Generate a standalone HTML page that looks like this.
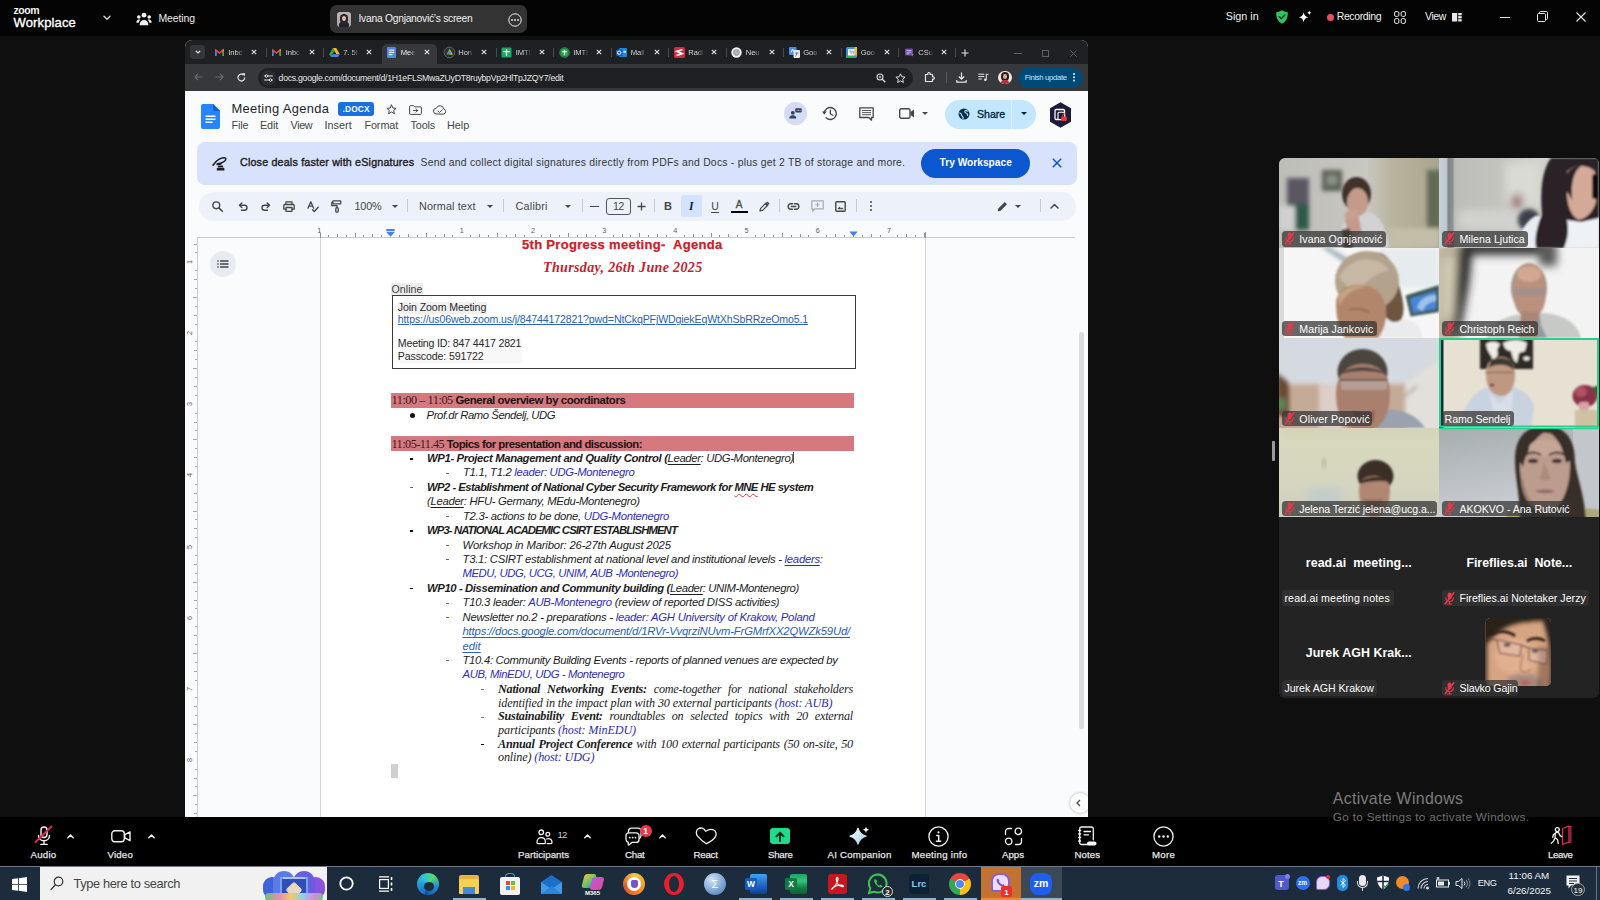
<!DOCTYPE html>
<html lang="en">
<head>
<meta charset="utf-8">
<title>Zoom Meeting</title>
<style>
*{box-sizing:border-box;margin:0;padding:0}
html,body{width:1600px;height:900px;overflow:hidden;background:#0f0f0f;font-family:"Liberation Sans",sans-serif;color:#fff}
div,span,svg,a,i,b{position:absolute;white-space:nowrap;display:block}
span{white-space:pre}
span.s{position:static;display:inline}
svg{overflow:visible}
.ic{fill:none;stroke:currentColor;stroke-linecap:round;stroke-linejoin:round}
#ztop{left:0;top:0;width:1600px;height:36px;background:#040404}
#pill{left:330px;top:5px;width:197px;height:28px;border-radius:7px;background:#333}
#win{left:185px;top:40px;width:902.500px;height:777.500px;background:#f9fbfd;border-radius:7px 7px 0 0;overflow:hidden}
#tabs{left:0;top:0;width:903px;height:23.500px;background:#1f2023}
#nav{left:0;top:23.500px;width:903px;height:27.500px;background:#37383b}
#tabs .x{top:8.700px;width:6px;height:6px}
#tabs .sep{top:8px;width:1px;height:9px;background:#4a4b4e}
#tabs .fv{top:6.500px;width:11px;height:11px}
#docs svg{color:#444746}
#docs .tsep{top:159px;width:1px;height:13px;background:#c7c9cc}
#docs .arr{width:0;height:0;border-left:3.200px solid transparent;border-right:3.200px solid transparent;border-top:3.600px solid #444746}
#page{left:134.500px;top:197.500px;width:606px;height:581px;background:#fff;border-left:1px solid #d4d6d9;border-right:1px solid #d4d6d9}
.u{text-decoration:underline;text-decoration-thickness:.8px;text-underline-offset:1.500px}
#gal{left:1279.200px;top:158px;width:320.200px;height:539.500px;background:#232323;border-radius:6px;overflow:hidden}
.tile{width:160.300px;height:89.900px;overflow:hidden;background:#232323}
.tile>svg{left:0;top:0}
.nm{left:2.500px;top:73px;height:15.500px;border-radius:3.500px;background:rgba(52,52,52,.74)}
.big{top:30px;left:0;width:160px;text-align:center;font-weight:bold;font-size:13.200px;color:#fff;line-height:16px}
#zbar{left:0;top:817px;width:1600px;height:49px;background:#000}
#zbar svg{color:#f2f2f2}
#task{left:0;top:866px;width:1600px;height:34px;background:#1c2c3c;border-top:1px solid #6f7c88}
#task .run{top:31px;height:2px;width:33px;background:#8fb3d4}
#task .ti{top:6px;width:22px;height:22px}
</style>
</head>
<body>

<div id="ztop">
<span style="left:13.50px;top:4px;font-size:10.50px;line-height:normal;color:#f5f5f5;font-weight:bold;letter-spacing:-0.480px;">zoom</span>
<span style="left:13.50px;top:15px;font-size:13.00px;line-height:normal;color:#fff;letter-spacing:0.146px;-webkit-text-stroke:.35px #fff;">Workplace</span>
<svg style="left:103px;top:15px" width="8" height="6" viewBox="0 0 8 6"><path class="ic" style="color:#ddd" stroke-width="1.3" d="M1 1.2l3 3 3-3"/></svg>
<svg style="left:136px;top:12px" width="16" height="14" viewBox="0 0 16 14" fill="#f2f2f2"><circle cx="8" cy="3.2" r="2.4"/><circle cx="2.8" cy="5" r="1.8"/><circle cx="13.2" cy="5" r="1.8"/><path d="M3.6 13.2c0-3.2 1.8-5.2 4.4-5.2s4.4 2 4.4 5.200z"/><path d="M0.300 10.800c0-2.200 1.200-3.400 2.700-3.400 0.500 0 0.900 0.100 1.300 0.300-1 1-1.500 2-1.700 3.100zM15.700 10.800c0-2.200-1.200-3.400-2.700-3.400-0.500 0-0.900 0.100-1.300 0.300 1 1 1.500 2 1.700 3.100z"/></svg>
<span style="left:158.50px;top:12px;font-size:10.50px;line-height:normal;color:#ececec;letter-spacing:-0.123px;">Meeting</span>
<div id="pill">
<div style="left:7px;top:7px;width:14px;height:15px;border-radius:3px;background:linear-gradient(180deg,#bdb7b4 0%,#a9a4a6 100%);overflow:hidden"><div style="left:3px;top:2px;width:8px;height:9px;border-radius:4px 4px 3px 3px;background:#2a2226"></div><div style="left:5px;top:4px;width:4px;height:5px;border-radius:2px;background:#d9b7a6"></div><div style="left:2px;top:10px;width:10px;height:6px;border-radius:3px 3px 0 0;background:#23232b"></div></div>
<span style="left:28.50px;top:8px;font-size:10.30px;line-height:normal;color:#f0f0f0;letter-spacing:-0.264px;">Ivana Ognjanović’s screen</span>
<svg style="left:177.500px;top:7.500px" width="14" height="14" viewBox="0 0 14 14"><circle cx="7" cy="7" r="6.2" fill="none" stroke="#eee" stroke-width="1"/><circle cx="4" cy="7" r=".9" fill="#eee"/><circle cx="7" cy="7" r=".9" fill="#eee"/><circle cx="10" cy="7" r=".9" fill="#eee"/></svg>
</div>
<span style="left:1225.70px;top:10px;font-size:10.80px;line-height:normal;color:#f0f0f0;letter-spacing:-0.002px;">Sign in</span>
<svg style="left:1274.500px;top:10px" width="14" height="14" viewBox="0 0 14 14"><path d="M7 .3c1.800 1.200 3.700 1.800 5.800 1.900 0.200 5.400-1.700 9.200-5.800 11.500C2.900 11.400 1 7.600 1.200 2.200 3.300 2.100 5.200 1.500 7 .3z" fill="#2fc45e"/><path d="M4.300 6.800l2 2 3.500-3.800" fill="none" stroke="#0a3d1c" stroke-width="1.500" stroke-linecap="round" stroke-linejoin="round"/></svg>
<svg style="left:1298px;top:9.500px" width="14" height="14" viewBox="0 0 14 14" fill="#fff"><path d="M5.600 2.200c.6 3.100 1.900 4.400 5 5-3.100.6-4.400 1.900-5 5-.6-3.100-1.900-4.400-5-5 3.100-.6 4.400-1.900 5-5z"/><path d="M11.300.4c.3 1.400.9 2 2.300 2.300-1.400.3-2 .9-2.300 2.300-.3-1.400-.9-2-2.300-2.300 1.400-.3 2-.9 2.300-2.300z"/></svg>
<div style="left:1326.500px;top:14px;width:7px;height:7px;border-radius:50%;background:#ea4f5c"></div>
<span style="left:1336.70px;top:10px;font-size:10.50px;line-height:normal;color:#f0f0f0;letter-spacing:-0.375px;">Recording</span>
<svg style="left:1394px;top:10.500px" width="12" height="13" viewBox="0 0 12 13"><g fill="none" stroke="#e8e8e8" stroke-width="1"><rect x=".6" y=".6" width="4.300" height="4.800" rx="1.400"/><rect x="7.100" y=".6" width="4.300" height="4.800" rx="1.400"/><rect x=".6" y="7.600" width="4.300" height="4.800" rx="1.400"/><rect x="7.100" y="7.600" width="4.300" height="4.800" rx="1.400"/></g></svg>
<span style="left:1425.00px;top:10px;font-size:10.50px;line-height:normal;color:#f0f0f0;letter-spacing:-0.395px;">View</span>
<svg style="left:1451.500px;top:12.500px" width="10" height="9" viewBox="0 0 10 9" fill="#e8e8e8"><rect x="0" y="0" width="5.200" height="8.500"/><rect x="6.200" y="0" width="3.500" height="2.300"/><rect x="6.200" y="3.100" width="3.500" height="2.300"/><rect x="6.200" y="6.200" width="3.500" height="2.300"/></svg>
<div style="left:1500px;top:16.500px;width:9.500px;height:1.200px;background:#e6e6e6"></div>
<svg style="left:1537px;top:11px" width="11" height="11" viewBox="0 0 11 11"><g fill="none" stroke="#e6e6e6" stroke-width="1"><rect x=".5" y="2.500" width="8" height="8" rx="1"/><path d="M2.500 2.500V1.500a1 1 0 0 1 1-1h6a1 1 0 0 1 1 1v6a1 1 0 0 1-1 1h-1"/></g></svg>
<svg style="left:1576px;top:12px" width="10" height="10" viewBox="0 0 10 10"><path d="M.5.5l9 9M9.500.5l-9 9" stroke="#e6e6e6" stroke-width="1.100" fill="none"/></svg>
</div>
<div id="win">
<div id="tabs">
<div style="left:5px;top:4.500px;width:15px;height:14.500px;border-radius:4px;background:#35363a"></div>
<svg style="left:9.500px;top:10px" width="6" height="4" viewBox="0 0 6 4"><path d="M.8.800L3 3 5.200.8" fill="none" stroke="#e8e8e8" stroke-width="1.200"/></svg>
<div style="left:197px;top:3.500px;width:54.500px;height:21px;border-radius:5px 5px 0 0;background:#37383b"></div>
<svg class="fv" style="left:28.5px" viewBox="0 0 11 11"><path d="M1.800 8.800V3.200L5.500 6l3.700-2.800v5.600" fill="none" stroke="#ea4335" stroke-width="1.600"/><path d="M1.800 9V3.800" stroke="#4285f4" stroke-width="1.600"/><path d="M9.200 9V3.800" stroke="#34a853" stroke-width="1.600"/><path d="M8.600 3.600l.9-.7" stroke="#fbbc04" stroke-width="1.400"/></svg>
<span style="left:43.30px;top:8px;font-size:7.60px;line-height:normal;color:#d9d9d9;width:15.500px;overflow:hidden;-webkit-mask-image:linear-gradient(90deg,#000 55%,transparent 100%);mask-image:linear-gradient(90deg,#000 55%,transparent 100%);letter-spacing:-.1px;">Inbc</span>
<svg class="x" style="left:66.2px" viewBox="0 0 6 6"><path d="M.8.800l4.400 4.400M5.200.8L.8 5.200" stroke="#e3e3e3" stroke-width="1.100" fill="none"/></svg>
<div class="sep" style="left:80.5px"></div>
<svg class="fv" style="left:86.0px" viewBox="0 0 11 11"><path d="M1.800 8.800V3.200L5.500 6l3.700-2.800v5.600" fill="none" stroke="#ea4335" stroke-width="1.600"/><path d="M1.800 9V3.800" stroke="#4285f4" stroke-width="1.600"/><path d="M9.200 9V3.800" stroke="#34a853" stroke-width="1.600"/><path d="M8.600 3.600l.9-.7" stroke="#fbbc04" stroke-width="1.400"/></svg>
<span style="left:100.80px;top:8px;font-size:7.60px;line-height:normal;color:#d9d9d9;width:15.500px;overflow:hidden;-webkit-mask-image:linear-gradient(90deg,#000 55%,transparent 100%);mask-image:linear-gradient(90deg,#000 55%,transparent 100%);letter-spacing:-.1px;">Inbc</span>
<svg class="x" style="left:123.7px" viewBox="0 0 6 6"><path d="M.8.800l4.400 4.400M5.200.8L.8 5.200" stroke="#e3e3e3" stroke-width="1.100" fill="none"/></svg>
<div class="sep" style="left:138.0px"></div>
<svg class="fv" style="left:143.5px" viewBox="0 0 11 11"><path d="M3.800 1h3.400l3.600 6.200H7.400z" fill="#fbbc04"/><path d="M3.800 1L.2 7.200 1.900 10l3.600-6.200z" fill="#34a853"/><path d="M1.900 10h7.200l1.700-2.800H3.600z" fill="#4285f4"/></svg>
<span style="left:158.30px;top:8px;font-size:7.60px;line-height:normal;color:#d9d9d9;width:15.500px;overflow:hidden;-webkit-mask-image:linear-gradient(90deg,#000 55%,transparent 100%);mask-image:linear-gradient(90deg,#000 55%,transparent 100%);letter-spacing:-.1px;">7. 5t</span>
<svg class="x" style="left:181.2px" viewBox="0 0 6 6"><path d="M.8.800l4.400 4.400M5.200.8L.8 5.200" stroke="#e3e3e3" stroke-width="1.100" fill="none"/></svg>
<svg class="fv" style="left:201.0px" viewBox="0 0 11 11"><rect x="1" y="0" width="9" height="11" rx="1.200" fill="#4c8bf5"/><path d="M2.800 3.200h5.400M2.800 5.400h5.400M2.800 7.600h3.600" stroke="#fff" stroke-width="1"/></svg>
<span style="left:215.80px;top:8px;font-size:7.60px;line-height:normal;color:#f0f0f0;width:15.500px;overflow:hidden;-webkit-mask-image:linear-gradient(90deg,#000 55%,transparent 100%);mask-image:linear-gradient(90deg,#000 55%,transparent 100%);letter-spacing:-.1px;">Mee</span>
<svg class="x" style="left:238.7px" viewBox="0 0 6 6"><path d="M.8.800l4.400 4.400M5.200.8L.8 5.200" stroke="#e3e3e3" stroke-width="1.100" fill="none"/></svg>
<svg class="fv" style="left:258.5px" viewBox="0 0 11 11"><circle cx="5.500" cy="5.500" r="5.300" fill="#2b2d30" stroke="#8a8d91" stroke-width=".6"/><path d="M5.500 1.800L2.200 7.600h6.600z" fill="#34a853"/><path d="M5.500 1.800l3.300 5.800H5.500z" fill="#fbbc04"/><circle cx="5.500" cy="6" r="1.400" fill="#4285f4"/></svg>
<span style="left:273.30px;top:8px;font-size:7.60px;line-height:normal;color:#d9d9d9;width:15.500px;overflow:hidden;-webkit-mask-image:linear-gradient(90deg,#000 55%,transparent 100%);mask-image:linear-gradient(90deg,#000 55%,transparent 100%);letter-spacing:-.1px;">Hon</span>
<svg class="x" style="left:296.2px" viewBox="0 0 6 6"><path d="M.8.800l4.400 4.400M5.200.8L.8 5.200" stroke="#e3e3e3" stroke-width="1.100" fill="none"/></svg>
<div class="sep" style="left:310.5px"></div>
<svg class="fv" style="left:316.0px" viewBox="0 0 11 11"><rect x=".5" y=".5" width="10" height="10" rx="1.200" fill="#1fa463"/><path d="M5.500 2v7M2.200 4.600h6.600" stroke="#e6f4ea" stroke-width="1.300"/></svg>
<span style="left:330.80px;top:8px;font-size:7.60px;line-height:normal;color:#d9d9d9;width:15.500px;overflow:hidden;-webkit-mask-image:linear-gradient(90deg,#000 55%,transparent 100%);mask-image:linear-gradient(90deg,#000 55%,transparent 100%);letter-spacing:-.1px;">IMTI</span>
<svg class="x" style="left:353.7px" viewBox="0 0 6 6"><path d="M.8.800l4.400 4.400M5.200.8L.8 5.200" stroke="#e3e3e3" stroke-width="1.100" fill="none"/></svg>
<div class="sep" style="left:368.0px"></div>
<svg class="fv" style="left:373.5px" viewBox="0 0 11 11"><circle cx="5.500" cy="5.500" r="5.400" fill="#1f7a44"/><rect x="2.300" y="2.300" width="6.400" height="6.400" rx=".8" fill="#34a853"/><path d="M5.500 2.800v5.400M3 4.800h5" stroke="#e6f4ea" stroke-width="1.100"/></svg>
<span style="left:388.30px;top:8px;font-size:7.60px;line-height:normal;color:#d9d9d9;width:15.500px;overflow:hidden;-webkit-mask-image:linear-gradient(90deg,#000 55%,transparent 100%);mask-image:linear-gradient(90deg,#000 55%,transparent 100%);letter-spacing:-.1px;">IMTI</span>
<svg class="x" style="left:411.2px" viewBox="0 0 6 6"><path d="M.8.800l4.400 4.400M5.200.8L.8 5.200" stroke="#e3e3e3" stroke-width="1.100" fill="none"/></svg>
<div class="sep" style="left:425.5px"></div>
<svg class="fv" style="left:431.0px" viewBox="0 0 11 11"><rect x="3" y="1" width="8" height="9" rx="1" fill="#1a86e0"/><rect x="0" y="2.500" width="6.500" height="6.500" rx="1" fill="#0f5fb5"/><circle cx="3.200" cy="5.700" r="1.700" fill="none" stroke="#fff" stroke-width="1"/><rect x="7.300" y="3.800" width="2.600" height="2" fill="#cfe6fb"/></svg>
<span style="left:445.80px;top:8px;font-size:7.60px;line-height:normal;color:#d9d9d9;width:15.500px;overflow:hidden;-webkit-mask-image:linear-gradient(90deg,#000 55%,transparent 100%);mask-image:linear-gradient(90deg,#000 55%,transparent 100%);letter-spacing:-.1px;">Mail</span>
<svg class="x" style="left:468.7px" viewBox="0 0 6 6"><path d="M.8.800l4.400 4.400M5.200.8L.8 5.200" stroke="#e3e3e3" stroke-width="1.100" fill="none"/></svg>
<div class="sep" style="left:483.0px"></div>
<svg class="fv" style="left:488.5px" viewBox="0 0 11 11"><rect x="0" y="0" width="11" height="11" rx="1.500" fill="#d7263d"/><path d="M8.500 2.500L2.800 4.300l5.400 2.400-5.700 1.800" fill="none" stroke="#fff" stroke-width="1.700"/></svg>
<span style="left:503.30px;top:8px;font-size:7.60px;line-height:normal;color:#d9d9d9;width:15.500px;overflow:hidden;-webkit-mask-image:linear-gradient(90deg,#000 55%,transparent 100%);mask-image:linear-gradient(90deg,#000 55%,transparent 100%);letter-spacing:-.1px;">Radi</span>
<svg class="x" style="left:526.2px" viewBox="0 0 6 6"><path d="M.8.800l4.400 4.400M5.200.8L.8 5.200" stroke="#e3e3e3" stroke-width="1.100" fill="none"/></svg>
<div class="sep" style="left:540.5px"></div>
<svg class="fv" style="left:546.0px" viewBox="0 0 11 11"><circle cx="5.500" cy="5.500" r="5.200" fill="#f2f2f2"/><circle cx="5.500" cy="5.500" r="3" fill="#b5b5b5"/><circle cx="5.500" cy="5.500" r="3" fill="none" stroke="#777" stroke-width=".6"/></svg>
<span style="left:560.80px;top:8px;font-size:7.60px;line-height:normal;color:#d9d9d9;width:15.500px;overflow:hidden;-webkit-mask-image:linear-gradient(90deg,#000 55%,transparent 100%);mask-image:linear-gradient(90deg,#000 55%,transparent 100%);letter-spacing:-.1px;">Neu</span>
<svg class="x" style="left:583.7px" viewBox="0 0 6 6"><path d="M.8.800l4.400 4.400M5.200.8L.8 5.200" stroke="#e3e3e3" stroke-width="1.100" fill="none"/></svg>
<div class="sep" style="left:598.0px"></div>
<svg class="fv" style="left:603.5px" viewBox="0 0 11 11"><rect x="0" y="0" width="7.500" height="8" rx="1" fill="#4c8bf5"/><rect x="4.500" y="3" width="6.500" height="8" rx="1" fill="#e8eaed"/><path d="M2 5.500l1.600-3.500 1.600 3.500" fill="none" stroke="#fff" stroke-width=".9"/><path d="M6.300 6h3.200M7.800 5.200V6c0 1.600-.6 2.800-1.500 3.500" fill="none" stroke="#5f6368" stroke-width=".8"/></svg>
<span style="left:618.30px;top:8px;font-size:7.60px;line-height:normal;color:#d9d9d9;width:15.500px;overflow:hidden;-webkit-mask-image:linear-gradient(90deg,#000 55%,transparent 100%);mask-image:linear-gradient(90deg,#000 55%,transparent 100%);letter-spacing:-.1px;">Goo</span>
<svg class="x" style="left:641.2px" viewBox="0 0 6 6"><path d="M.8.800l4.400 4.400M5.200.8L.8 5.200" stroke="#e3e3e3" stroke-width="1.100" fill="none"/></svg>
<div class="sep" style="left:655.5px"></div>
<svg class="fv" style="left:661.0px" viewBox="0 0 11 11"><rect x="0" y="0" width="11" height="11" rx="1.600" fill="#4285f4"/><rect x="0" y="8.500" width="8.500" height="2.500" fill="#34a853"/><rect x="8.500" y="0" width="2.500" height="8.500" fill="#fbbc04"/><rect x="2" y="2" width="6.500" height="6.500" fill="#fff"/><path d="M3.300 4h1.800v3.300M6.200 4.300l1-.5v3.500" fill="none" stroke="#4285f4" stroke-width=".8"/></svg>
<span style="left:675.80px;top:8px;font-size:7.60px;line-height:normal;color:#d9d9d9;width:15.500px;overflow:hidden;-webkit-mask-image:linear-gradient(90deg,#000 55%,transparent 100%);mask-image:linear-gradient(90deg,#000 55%,transparent 100%);letter-spacing:-.1px;">Goo</span>
<svg class="x" style="left:698.7px" viewBox="0 0 6 6"><path d="M.8.800l4.400 4.400M5.200.8L.8 5.200" stroke="#e3e3e3" stroke-width="1.100" fill="none"/></svg>
<div class="sep" style="left:713.0px"></div>
<svg class="fv" style="left:718.5px" viewBox="0 0 11 11"><rect x="1" y="1.500" width="8" height="7" rx="1" fill="#6b4aa8"/><path d="M2.500 3.500h5M2.500 5.200h5M2.500 6.800h3" stroke="#e6d8ff" stroke-width=".7"/><path d="M7 6.500l3 1.200-1.300.5-.5 1.300z" fill="#e86aa6"/></svg>
<span style="left:733.30px;top:8px;font-size:7.60px;line-height:normal;color:#d9d9d9;width:15.500px;overflow:hidden;-webkit-mask-image:linear-gradient(90deg,#000 55%,transparent 100%);mask-image:linear-gradient(90deg,#000 55%,transparent 100%);letter-spacing:-.1px;">CSu</span>
<svg class="x" style="left:756.2px" viewBox="0 0 6 6"><path d="M.8.800l4.400 4.400M5.200.8L.8 5.200" stroke="#e3e3e3" stroke-width="1.100" fill="none"/></svg>
<div class="sep" style="left:770px"></div>
<svg style="left:776px;top:9px" width="8" height="8" viewBox="0 0 8 8"><path d="M4 .5v7M.5 4h7" stroke="#e3e3e3" stroke-width="1.100"/></svg>
<div style="left:829px;top:12.500px;width:8px;height:1px;background:#5f6063"></div>
<div style="left:857px;top:9.500px;width:7px;height:7px;border:1px solid #5f6063"></div>
<svg style="left:884.500px;top:9.500px" width="7" height="7" viewBox="0 0 7 7"><path d="M.3.300l6.400 6.400M6.700.3L.3 6.700" stroke="#5f6063" stroke-width="1"/></svg>
</div>
<div id="nav">
<svg style="left:9px;top:9.500px" width="9" height="8" viewBox="0 0 9 8"><path d="M8.500 4H1M4 .8L.8 4 4 7.200" fill="none" stroke="#6b6c6f" stroke-width="1.100"/></svg>
<svg style="left:30px;top:9.500px" width="9" height="8" viewBox="0 0 9 8"><path d="M.5 4H8M5 .8L8.200 4 5 7.200" fill="none" stroke="#6b6c6f" stroke-width="1.100"/></svg>
<svg style="left:51.500px;top:9px" width="9" height="9" viewBox="0 0 9 9"><path d="M7.800 4.500A3.400 3.400 0 1 1 6.700 2" fill="none" stroke="#e6e6e6" stroke-width="1.200"/><path d="M5 .3h3v3z" fill="#e6e6e6"/></svg>
<div style="left:73px;top:4.500px;width:655px;height:19.500px;border-radius:10px;background:#1f2023"></div>
<div style="left:75.500px;top:6.500px;width:15.500px;height:15.500px;border-radius:50%;background:#2a2b2e"></div>
<svg style="left:79px;top:10.500px" width="9" height="8" viewBox="0 0 9 8"><g fill="none" stroke="#e6e6e6" stroke-width="1"><path d="M3.800 2h5M.2 2h1M.2 6h5M7.800 6h1"/><circle cx="2.500" cy="2" r="1.200"/><circle cx="6.500" cy="6" r="1.200"/></g></svg>
<span style="left:93.60px;top:9px;font-size:8.70px;line-height:normal;color:#e8e8e8;letter-spacing:-0.270px;">docs.google.com/document/d/1H1eFLSMwaZUyDT8ruybpVp2HlTpJZQY7/edit</span>
<svg style="left:691px;top:9.500px" width="10" height="10" viewBox="0 0 10 10"><circle cx="4" cy="4" r="3" fill="none" stroke="#dcdcdc" stroke-width="1.100"/><path d="M6.300 6.300L9.300 9.300" stroke="#dcdcdc" stroke-width="1.300"/><path d="M2.700 4h2.600M4 2.700v2.600" stroke="#dcdcdc" stroke-width=".8"/></svg>
<svg style="left:710px;top:9px" width="11" height="10" viewBox="0 0 11 10"><path d="M5.500.8l1.400 3 3.200.3-2.400 2.200.7 3.200-2.900-1.700-2.900 1.700.7-3.200L.9 4.100l3.200-.3z" fill="none" stroke="#dcdcdc" stroke-width="1"/></svg>
<svg style="left:739px;top:8.500px" width="11" height="11" viewBox="0 0 11 11"><path d="M1.500 2.500h2.300a1.300 1.300 0 1 1 2.400 0h2.300v2.300a1.300 1.300 0 1 1 0 2.400v2.300h-7z" fill="none" stroke="#e6e6e6" stroke-width="1.200" stroke-linejoin="round"/></svg>
<div style="left:760.500px;top:8px;width:1px;height:11px;background:#5a5b5e"></div>
<svg style="left:771px;top:8.500px" width="11" height="11" viewBox="0 0 11 11"><path d="M5.500.5v6.500M2.800 4.500l2.700 2.700 2.700-2.700M.8 8v2.200h9.400V8" fill="none" stroke="#e6e6e6" stroke-width="1.200"/></svg>
<svg style="left:793px;top:9px" width="11" height="9" viewBox="0 0 11 9"><path d="M.3 1.200h6M.3 3.600h6M.3 6h3.500" stroke="#e6e6e6" stroke-width="1"/><path d="M8.300 1v5.500" stroke="#e6e6e6" stroke-width="1"/><circle cx="7.300" cy="6.800" r="1.300" fill="#e6e6e6"/><path d="M8.300 1l2.200.8" stroke="#e6e6e6" stroke-width="1"/></svg>
<div style="left:813px;top:7px;width:13.500px;height:13.500px;border-radius:50%;background:#efe9e6;overflow:hidden"><div style="left:3px;top:1.500px;width:7.500px;height:9px;border-radius:4px;background:#2a1d1d"></div><div style="left:5px;top:3.500px;width:3.500px;height:4.500px;border-radius:2px;background:#d9a892"></div><div style="left:2.500px;top:9.500px;width:8.500px;height:5px;border-radius:3px 3px 0 0;background:#b0323a"></div></div>
<div style="left:832.500px;top:4.500px;width:65px;height:19.500px;border-radius:10px;background:#004a77"></div>
<span style="left:839.70px;top:9px;font-size:7.80px;line-height:normal;color:#c2e7ff;letter-spacing:-0.370px;">Finish update</span>
<div style="left:888px;top:9.500px;width:1.600px;height:1.600px;border-radius:50%;background:#c2e7ff;box-shadow:0 3.300px 0 #c2e7ff,0 6.600px 0 #c2e7ff"></div>
</div>
<div id="docs" style="left:0;top:0;width:903px;height:200px">
<svg style="left:16.4px;top:63.6px" width="19" height="25" viewBox="0 0 19 25"><path d="M2 0h10l7 7v16a2 2 0 0 1-2 2H2a2 2 0 0 1-2-2V2a2 2 0 0 1 2-2z" fill="#2684fc"/><path d="M12 0l7 7h-5a2 2 0 0 1-2-2z" fill="#0b5fd0"/><path d="M4.500 12.200h10M4.500 15.200h10M4.500 18.200h7" stroke="#fff" stroke-width="1.400"/></svg>
<span style="left:46.40px;top:61px;font-size:12.90px;line-height:normal;color:#1f1f1f;letter-spacing:0.329px;">Meeting Agenda</span>
<div style="left:153.0px;top:62.0px;width:36px;height:14px;border-radius:3px;background:#1a6fe3"></div>
<span style="left:157.50px;top:64px;font-size:8.30px;line-height:normal;color:#fff;font-weight:bold;letter-spacing:0.204px;">.DOCX</span>
<svg style="left:201.0px;top:64.0px" width="11" height="11" viewBox="0 0 11 11"><path class="ic" stroke-width="1" stroke-linejoin="miter" d="M5.500 1l1.400 3 3.200.3-2.400 2.200.7 3.200-2.900-1.700-2.900 1.700.7-3.200L.9 4.300l3.200-.3z"/></svg>
<svg style="left:224.3px;top:64.8px" width="13" height="10" viewBox="0 0 13 10"><path class="ic" stroke-width="1" d="M.6 1.500c0-.5.400-.9.900-.9h3l1.200 1.300h5.800c.5 0 .9.400.9.900v5.700c0 .5-.4.900-.9.900h-10c-.5 0-.9-.4-.9-.9z"/><path class="ic" stroke-width="1" d="M4.500 5.500h4M7 3.800l1.700 1.700L7 7.200"/></svg>
<svg style="left:247.5px;top:64.8px" width="14" height="10" viewBox="0 0 14 10"><path class="ic" stroke-width="1" d="M3.500 9A2.900 2.900 0 0 1 3.300 3.200 3.900 3.900 0 0 1 10.800 4 2.600 2.600 0 0 1 10.800 9z"/><path class="ic" stroke-width="1" d="M5 6l1.500 1.500L9.200 4.800"/></svg>
<span style="left:46.60px;top:79px;font-size:10.80px;line-height:normal;color:#444746;letter-spacing:-0.202px;">File</span>
<span style="left:75.00px;top:79px;font-size:10.80px;line-height:normal;color:#444746;letter-spacing:-0.152px;">Edit</span>
<span style="left:105.60px;top:79px;font-size:10.80px;line-height:normal;color:#444746;letter-spacing:-0.405px;">View</span>
<span style="left:139.40px;top:79px;font-size:10.80px;line-height:normal;color:#444746;letter-spacing:0.064px;">Insert</span>
<span style="left:179.40px;top:79px;font-size:10.80px;line-height:normal;color:#444746;letter-spacing:-0.067px;">Format</span>
<span style="left:225.40px;top:79px;font-size:10.80px;line-height:normal;color:#444746;letter-spacing:-0.084px;">Tools</span>
<span style="left:262.00px;top:79px;font-size:10.80px;line-height:normal;color:#444746;letter-spacing:-0.005px;">Help</span>
<div style="left:599.2px;top:62.2px;width:23px;height:23px;border-radius:50%;background:#d5dcf6"></div>
<svg style="left:604.0px;top:68.0px" width="13" height="11" viewBox="0 0 13 11" fill="#3a3f5a"><circle cx="3.800" cy="4.800" r="1.900"/><path d="M.3 10.500c0-2.200 1.500-3.300 3.500-3.300s3.500 1.100 3.500 3.300z"/><rect x="6.200" y=".2" width="6.500" height="4.200" rx=".8"/><circle cx="8" cy="2.300" r=".5" fill="#d5dcf6"/><circle cx="9.500" cy="2.300" r=".5" fill="#d5dcf6"/><circle cx="11" cy="2.300" r=".5" fill="#d5dcf6"/></svg>
<svg style="left:637.0px;top:66.0px" width="16" height="15" viewBox="0 0 16 15"><path class="ic" stroke-width="1.400" d="M2.300 7.500a6 6 0 1 1 1.800 4.300"/><path d="M0 5.500h4.800L2.400 8.600z" fill="currentColor"/><path class="ic" stroke-width="1.300" d="M8.300 4.200v3.600l2.500 1.500"/></svg>
<svg style="left:674.2px;top:66.8px" width="15" height="14" viewBox="0 0 15 14"><path class="ic" stroke-width="1.300" stroke-linejoin="miter" d="M.8.800h13.400v9.700h-1.700v2.700l-2.700-2.700h-9z"/><path d="M3 3.500h9M3 5.600h9M3 7.700h9" stroke="currentColor" stroke-width=".9"/></svg>
<svg style="left:713.8px;top:68.2px" width="16" height="11" viewBox="0 0 16 11"><path class="ic" stroke-width="1.400" d="M2.200.8h7.300a1.500 1.500 0 0 1 1.500 1.500v6.400a1.500 1.500 0 0 1-1.500 1.500H2.200A1.500 1.500 0 0 1 .7 8.700V2.300A1.500 1.500 0 0 1 2.200.8z"/><path d="M11.500 4l3.500-2.500v8L11.500 7z" fill="currentColor"/></svg>
<div class="arr" style="left:736.6px;top:72.2px"></div>
<div style="left:760.0px;top:59.5px;width:91px;height:29px;border-radius:14.500px;background:#c2e7ff"></div>
<div style="left:826.4px;top:59.5px;width:1px;height:29px;background:#d9f0ff"></div>
<svg style="left:773.0px;top:68.0px" width="12" height="12" viewBox="0 0 12 12"><circle cx="6" cy="6" r="5.500" fill="#062e4f"/><path d="M1.200 4.800c1.500.2 2.200 1 2.300 2.200.1 1 .8 1.300 1.400 1.800.3.800.2 1.600 0 2.400M10.500 3.200c-1.200.1-2-.2-2.400-1-1 .3-1.500 1-1.200 1.900.3 1 1.600.8 2.200 1.600.4.700.2 1.500.9 2.100" fill="none" stroke="#c2e7ff" stroke-width="1.100"/></svg>
<span style="left:792.00px;top:68px;font-size:10.60px;line-height:normal;color:#001d35;letter-spacing:-0.016px;-webkit-text-stroke:.3px #001d35;">Share</span>
<div class="arr" style="left:836.3px;top:72.4px;border-top-color:#001d35"></div>
<svg style="left:864.0px;top:61.5px" width="23" height="26" viewBox="0 0 23 26"><path d="M11.500.3l10.500 6v13.400l-10.500 6L1 19.700V6.300z" fill="#1d1b3a"/><rect x="6" y="7.500" width="9.500" height="10" rx="1.200" fill="none" stroke="#fff" stroke-width="1.300"/><rect x="9" y="10.200" width="6.500" height="7.300" rx="1" fill="#1d1b3a" stroke="#fff" stroke-width="1.100"/><rect x="12.200" y="14.500" width="5.600" height="4.600" rx="1" fill="#e53935"/><path d="M13.500 14.500v-1.200a1.500 1.500 0 0 1 3 0v1.200" fill="none" stroke="#e53935" stroke-width="1"/></svg>
<div style="left:12.3px;top:101.6px;width:879.500px;height:43.500px;border-radius:8px;background:#d9e2fc"></div>
<svg style="left:26.5px;top:116.5px" width="15" height="14" viewBox="0 0 15 14"><path d="M1 8.200C4 4 8 .8 12 .8c1.500 0 2.300.8 1.600 2C12.400 4.800 9 6.300 5.500 6.800" fill="none" stroke="#1f1f1f" stroke-width="1.500" stroke-linecap="round"/><path d="M4.500 7.500l5-.5" stroke="#1f1f1f" stroke-width="1.300"/><path d="M6.300 8.600h4.500l.8 1.800H5.500z" fill="#1f1f1f"/><rect x="4.800" y="11" width="7.600" height="2.600" rx=".5" fill="#1f1f1f"/></svg>
<span style="left:55.00px;top:116px;font-size:10.70px;line-height:normal;color:#1f1f1f;letter-spacing:0.193px;-webkit-text-stroke:.4px #1f1f1f;">Close deals faster with eSignatures</span>
<span style="left:235.50px;top:117px;font-size:10.40px;line-height:normal;color:#333638;letter-spacing:0.229px;">Send and collect digital signatures directly from PDFs and Docs - plus get 2 TB of storage and more.</span>
<div style="left:736.0px;top:108.5px;width:109px;height:29.500px;border-radius:15px;background:#0b57d0"></div>
<span style="left:754.60px;top:117px;font-size:10.20px;line-height:normal;color:#fff;font-weight:bold;letter-spacing:-0.007px;">Try Workspace</span>
<svg style="left:867.4px;top:118.4px" width="10" height="10" viewBox="0 0 10 10"><path d="M.8.800l8.400 8.400M9.200.8L.8 9.200" stroke="#0b57d0" stroke-width="1.500" fill="none"/></svg>
<div style="left:14.0px;top:152.0px;width:877px;height:29px;border-radius:14.500px;background:#edf2fa"></div>
<svg style="left:26.9px;top:160.8px" width="11" height="11" viewBox="0 0 11 11"><circle class="ic" stroke-width="1.400" cx="4.300" cy="4.300" r="3.400"/><path class="ic" stroke-width="1.600" d="M6.900 6.900l3.400 3.400"/></svg>
<svg style="left:52.6px;top:161.8px" width="10" height="9" viewBox="0 0 10 9"><path class="ic" stroke-width="1.400" stroke-linejoin="miter" d="M2 3.200h4.500a2.500 2.500 0 0 1 0 5H3.500"/><path class="ic" stroke-width="1.400" stroke-linejoin="miter" d="M3.800 1L1.500 3.200l2.300 2.200"/></svg>
<svg style="left:76.0px;top:161.8px" width="10" height="9" viewBox="0 0 10 9"><path class="ic" stroke-width="1.400" stroke-linejoin="miter" d="M8 3.200H3.500a2.500 2.500 0 0 0 0 5h3"/><path class="ic" stroke-width="1.400" stroke-linejoin="miter" d="M6.200 1l2.300 2.200-2.300 2.200"/></svg>
<svg style="left:98.4px;top:160.8px" width="12" height="11" viewBox="0 0 12 11"><path class="ic" stroke-width="1.300" stroke-linejoin="miter" d="M3 3.500V.8h6v2.700M3 8.200H.8V4.500a1 1 0 0 1 1-1h8.400a1 1 0 0 1 1 1v3.700H9"/><rect class="ic" stroke-width="1.300" x="3" y="6.500" width="6" height="3.800"/></svg>
<svg style="left:121.6px;top:160.8px" width="12" height="11" viewBox="0 0 12 11"><path class="ic" stroke-width="1.300" d="M1 7.200L3.800.8l2.800 6.400M1.900 5.200h3.800"/><path class="ic" stroke-width="1.400" d="M5.500 8.700l1.800 1.700 3.900-4.200"/></svg>
<svg style="left:145.5px;top:159.8px" width="11" height="13" viewBox="0 0 11 13"><rect class="ic" stroke-width="1.300" x="1.800" y=".8" width="8" height="3" rx=".6"/><path class="ic" stroke-width="1.300" d="M1.800 2.300H.8v3.400h5.200v2"/><rect class="ic" stroke-width="1.300" x="4.800" y="7.700" width="2.400" height="4.500" rx="1"/></svg>
<span style="left:169.40px;top:160px;font-size:10.80px;line-height:normal;color:#444746;letter-spacing:-0.106px;">100%</span>
<div class="arr" style="left:206.8px;top:165.0px"></div>
<div class="tsep" style="left:222.4px"></div>
<span style="left:234.00px;top:160px;font-size:10.80px;line-height:normal;color:#444746;letter-spacing:0.127px;">Normal text</span>
<div class="arr" style="left:302.2px;top:165.0px"></div>
<div class="tsep" style="left:318.0px"></div>
<span style="left:330.60px;top:160px;font-size:10.80px;line-height:normal;color:#444746;letter-spacing:0.199px;">Calibri</span>
<div class="arr" style="left:380.2px;top:165.0px"></div>
<div class="tsep" style="left:397.0px"></div>
<div style="left:405.0px;top:165.7px;width:8.500px;height:1.300px;background:#444746"></div>
<div style="left:421.0px;top:157.5px;width:25px;height:17px;border-radius:3px;border:1px solid #555"></div>
<span style="left:428.00px;top:160px;font-size:10.80px;line-height:normal;color:#444746;letter-spacing:-0.808px;">12</span>
<svg style="left:451.7px;top:161.8px" width="9" height="9" viewBox="0 0 9 9"><path d="M4.500.5v8M.5 4.500h8" stroke="#444746" stroke-width="1.300"/></svg>
<div class="tsep" style="left:469.0px"></div>
<span style="left:483.00px;top:160px;font-size:11.00px;line-height:normal;color:#444746;font-weight:bold;transform:translateX(-50%);">B</span>
<div style="left:496.0px;top:155.0px;width:21px;height:21.500px;border-radius:3px;background:#d3e3fd"></div>
<span style="left:506.20px;top:160px;font-size:11.50px;line-height:normal;font-family:'Liberation Serif',serif;color:#041e49;font-weight:bold;font-style:italic;transform:translateX(-50%);">I</span>
<span style="left:530.00px;top:160px;font-size:10.50px;line-height:normal;color:#444746;transform:translateX(-50%);text-decoration:underline;text-underline-offset:1.500px;">U</span>
<span style="left:554.00px;top:159px;font-size:10.00px;line-height:normal;color:#444746;transform:translateX(-50%);-webkit-text-stroke:.3px #444746;">A</span>
<div style="left:546.0px;top:170.5px;width:16.500px;height:2.600px;background:#000"></div>
<svg style="left:573.5px;top:160.8px" width="11" height="11" viewBox="0 0 11 11"><path d="M1 10l.6-2.600L7 2l2 2-5.400 5.400z" fill="none" stroke="currentColor" stroke-width="1.200" stroke-linejoin="round"/><path d="M7.500 1.500l1-1 2 2-1 1z" fill="currentColor"/><path d="M6.500 2.500l2 2" stroke="currentColor" stroke-width="1.800"/></svg>
<div class="tsep" style="left:594.4px"></div>
<svg style="left:601.5px;top:162.8px" width="13" height="7" viewBox="0 0 13 7"><path class="ic" stroke-width="1.400" d="M5.500.8H3.800a2.700 2.700 0 0 0 0 5.400h1.700M7.500.8h1.700a2.700 2.700 0 0 1 0 5.400H7.500M4.200 3.500h4.600"/></svg>
<svg style="left:625.5px;top:160.3px" width="13" height="12" viewBox="0 0 13 12"><path d="M.8.800h11.400v8H4l-2.200 2.200V8.800H.8z" fill="none" stroke="#a8abb0" stroke-width="1.200"/><path d="M6.500 2.700v4.200M4.400 4.800h4.200" stroke="#a8abb0" stroke-width="1.100"/></svg>
<svg style="left:650.1px;top:160.8px" width="11" height="11" viewBox="0 0 11 11"><rect class="ic" stroke-width="1.400" stroke-linejoin="miter" x=".8" y=".8" width="9.400" height="9.400" rx="1"/><path d="M2.500 8.200l2-2.600 1.500 1.800 1-1.200 1.700 2z" fill="currentColor"/></svg>
<div class="tsep" style="left:671.0px"></div>
<div style="left:684.5px;top:161.2px;width:2.200px;height:2.200px;border-radius:50%;background:#444746;box-shadow:0 4px 0 #444746,0 8px 0 #444746"></div>
<svg style="left:811.9px;top:160.8px" width="11" height="11" viewBox="0 0 11 11"><path d="M.8 10.200l.5-2.800L7.700 1l2.300 2.300-6.400 6.400z" fill="currentColor"/></svg>
<div class="arr" style="left:829.8px;top:165.0px"></div>
<div class="tsep" style="left:855.4px"></div>
<svg style="left:865.1px;top:163.3px" width="9" height="6" viewBox="0 0 9 6"><path class="ic" stroke-width="1.500" stroke-linejoin="miter" d="M1 5l3.500-3.500L8 5"/></svg>
</div>
<div id="page"></div>
<div style="left:12.3px;top:197.2px;width:878px;height:1px;background:#c9ccd0"></div>
<div style="left:142.8px;top:195.4px;width:1px;height:1.8px;background:#8f9398"></div>
<div style="left:151.7px;top:194.2px;width:1px;height:3.0px;background:#8f9398"></div>
<div style="left:160.6px;top:195.4px;width:1px;height:1.8px;background:#8f9398"></div>
<div style="left:169.5px;top:192.7px;width:1px;height:4.5px;background:#8f9398"></div>
<div style="left:178.4px;top:195.4px;width:1px;height:1.8px;background:#8f9398"></div>
<div style="left:187.3px;top:194.2px;width:1px;height:3.0px;background:#8f9398"></div>
<div style="left:196.2px;top:195.4px;width:1px;height:1.8px;background:#8f9398"></div>
<div style="left:214.0px;top:195.4px;width:1px;height:1.8px;background:#8f9398"></div>
<div style="left:222.9px;top:194.2px;width:1px;height:3.0px;background:#8f9398"></div>
<div style="left:231.8px;top:195.4px;width:1px;height:1.8px;background:#8f9398"></div>
<div style="left:240.7px;top:192.7px;width:1px;height:4.5px;background:#8f9398"></div>
<div style="left:249.6px;top:195.4px;width:1px;height:1.8px;background:#8f9398"></div>
<div style="left:258.5px;top:194.2px;width:1px;height:3.0px;background:#8f9398"></div>
<div style="left:267.4px;top:195.4px;width:1px;height:1.8px;background:#8f9398"></div>
<div style="left:285.2px;top:195.4px;width:1px;height:1.8px;background:#8f9398"></div>
<div style="left:294.1px;top:194.2px;width:1px;height:3.0px;background:#8f9398"></div>
<div style="left:303.0px;top:195.4px;width:1px;height:1.8px;background:#8f9398"></div>
<div style="left:311.9px;top:192.7px;width:1px;height:4.5px;background:#8f9398"></div>
<div style="left:320.8px;top:195.4px;width:1px;height:1.8px;background:#8f9398"></div>
<div style="left:329.7px;top:194.2px;width:1px;height:3.0px;background:#8f9398"></div>
<div style="left:338.6px;top:195.4px;width:1px;height:1.8px;background:#8f9398"></div>
<div style="left:356.4px;top:195.4px;width:1px;height:1.8px;background:#8f9398"></div>
<div style="left:365.3px;top:194.2px;width:1px;height:3.0px;background:#8f9398"></div>
<div style="left:374.2px;top:195.4px;width:1px;height:1.8px;background:#8f9398"></div>
<div style="left:383.1px;top:192.7px;width:1px;height:4.5px;background:#8f9398"></div>
<div style="left:392.0px;top:195.4px;width:1px;height:1.8px;background:#8f9398"></div>
<div style="left:400.9px;top:194.2px;width:1px;height:3.0px;background:#8f9398"></div>
<div style="left:409.8px;top:195.4px;width:1px;height:1.8px;background:#8f9398"></div>
<div style="left:427.6px;top:195.4px;width:1px;height:1.8px;background:#8f9398"></div>
<div style="left:436.5px;top:194.2px;width:1px;height:3.0px;background:#8f9398"></div>
<div style="left:445.4px;top:195.4px;width:1px;height:1.8px;background:#8f9398"></div>
<div style="left:454.3px;top:192.7px;width:1px;height:4.5px;background:#8f9398"></div>
<div style="left:463.2px;top:195.4px;width:1px;height:1.8px;background:#8f9398"></div>
<div style="left:472.1px;top:194.2px;width:1px;height:3.0px;background:#8f9398"></div>
<div style="left:481.0px;top:195.4px;width:1px;height:1.8px;background:#8f9398"></div>
<div style="left:498.8px;top:195.4px;width:1px;height:1.8px;background:#8f9398"></div>
<div style="left:507.7px;top:194.2px;width:1px;height:3.0px;background:#8f9398"></div>
<div style="left:516.6px;top:195.4px;width:1px;height:1.8px;background:#8f9398"></div>
<div style="left:525.5px;top:192.7px;width:1px;height:4.5px;background:#8f9398"></div>
<div style="left:534.4px;top:195.4px;width:1px;height:1.8px;background:#8f9398"></div>
<div style="left:543.3px;top:194.2px;width:1px;height:3.0px;background:#8f9398"></div>
<div style="left:552.2px;top:195.4px;width:1px;height:1.8px;background:#8f9398"></div>
<div style="left:570.0px;top:195.4px;width:1px;height:1.8px;background:#8f9398"></div>
<div style="left:578.9px;top:194.2px;width:1px;height:3.0px;background:#8f9398"></div>
<div style="left:587.8px;top:195.4px;width:1px;height:1.8px;background:#8f9398"></div>
<div style="left:596.7px;top:192.7px;width:1px;height:4.5px;background:#8f9398"></div>
<div style="left:605.6px;top:195.4px;width:1px;height:1.8px;background:#8f9398"></div>
<div style="left:614.5px;top:194.2px;width:1px;height:3.0px;background:#8f9398"></div>
<div style="left:623.4px;top:195.4px;width:1px;height:1.8px;background:#8f9398"></div>
<div style="left:641.2px;top:195.4px;width:1px;height:1.8px;background:#8f9398"></div>
<div style="left:650.1px;top:194.2px;width:1px;height:3.0px;background:#8f9398"></div>
<div style="left:659.0px;top:195.4px;width:1px;height:1.8px;background:#8f9398"></div>
<div style="left:667.9px;top:192.7px;width:1px;height:4.5px;background:#8f9398"></div>
<div style="left:676.8px;top:195.4px;width:1px;height:1.8px;background:#8f9398"></div>
<div style="left:685.7px;top:194.2px;width:1px;height:3.0px;background:#8f9398"></div>
<div style="left:694.6px;top:195.4px;width:1px;height:1.8px;background:#8f9398"></div>
<div style="left:712.4px;top:195.4px;width:1px;height:1.8px;background:#8f9398"></div>
<div style="left:721.3px;top:194.2px;width:1px;height:3.0px;background:#8f9398"></div>
<div style="left:730.2px;top:195.4px;width:1px;height:1.8px;background:#8f9398"></div>
<div style="left:739.1px;top:192.7px;width:1px;height:4.5px;background:#8f9398"></div>
<span style="left:134.40px;top:186px;font-size:7.30px;line-height:normal;color:#5f6368;transform:translateX(-50%);">1</span>
<span style="left:276.80px;top:186px;font-size:7.30px;line-height:normal;color:#5f6368;transform:translateX(-50%);">1</span>
<span style="left:348.00px;top:186px;font-size:7.30px;line-height:normal;color:#5f6368;transform:translateX(-50%);">2</span>
<span style="left:419.20px;top:186px;font-size:7.30px;line-height:normal;color:#5f6368;transform:translateX(-50%);">3</span>
<span style="left:490.40px;top:186px;font-size:7.30px;line-height:normal;color:#5f6368;transform:translateX(-50%);">4</span>
<span style="left:561.60px;top:186px;font-size:7.30px;line-height:normal;color:#5f6368;transform:translateX(-50%);">5</span>
<span style="left:632.80px;top:186px;font-size:7.30px;line-height:normal;color:#5f6368;transform:translateX(-50%);">6</span>
<span style="left:704.00px;top:186px;font-size:7.30px;line-height:normal;color:#5f6368;transform:translateX(-50%);">7</span>
<svg style="left:201.1px;top:188.8px" width="9" height="8" viewBox="0 0 9 8"><rect x=".3" y="0" width="8.400" height="2.200" fill="#4a7fe8"/><path d="M.3 3h8.400L4.500 7.800z" fill="#4a7fe8"/></svg>
<svg style="left:663.9px;top:191.2px" width="9" height="6" viewBox="0 0 9 6"><path d="M.3.500h8.400L4.500 5.500z" fill="#4a7fe8"/></svg>
<div style="left:740.0px;top:192.0px;width:1px;height:6px;background:#8f9398"></div>
<div style="left:134.5px;top:192.5px;width:1px;height:5px;background:#8f9398"></div>
<div style="left:12.0px;top:197.2px;width:1px;height:580px;background:#c9ccd0"></div>
<div style="left:9.0px;top:203.5px;width:3.0px;height:1px;background:#a9adb2"></div>
<div style="left:10.2px;top:212.4px;width:1.8px;height:1px;background:#a9adb2"></div>
<div style="left:10.2px;top:230.2px;width:1.8px;height:1px;background:#a9adb2"></div>
<div style="left:9.0px;top:239.1px;width:3.0px;height:1px;background:#a9adb2"></div>
<div style="left:10.2px;top:248.0px;width:1.8px;height:1px;background:#a9adb2"></div>
<div style="left:7.5px;top:256.9px;width:4.5px;height:1px;background:#a9adb2"></div>
<div style="left:10.2px;top:265.8px;width:1.8px;height:1px;background:#a9adb2"></div>
<div style="left:9.0px;top:274.7px;width:3.0px;height:1px;background:#a9adb2"></div>
<div style="left:10.2px;top:283.6px;width:1.8px;height:1px;background:#a9adb2"></div>
<div style="left:10.2px;top:301.4px;width:1.8px;height:1px;background:#a9adb2"></div>
<div style="left:9.0px;top:310.3px;width:3.0px;height:1px;background:#a9adb2"></div>
<div style="left:10.2px;top:319.2px;width:1.8px;height:1px;background:#a9adb2"></div>
<div style="left:7.5px;top:328.1px;width:4.5px;height:1px;background:#a9adb2"></div>
<div style="left:10.2px;top:337.0px;width:1.8px;height:1px;background:#a9adb2"></div>
<div style="left:9.0px;top:345.9px;width:3.0px;height:1px;background:#a9adb2"></div>
<div style="left:10.2px;top:354.8px;width:1.8px;height:1px;background:#a9adb2"></div>
<div style="left:10.2px;top:372.6px;width:1.8px;height:1px;background:#a9adb2"></div>
<div style="left:9.0px;top:381.5px;width:3.0px;height:1px;background:#a9adb2"></div>
<div style="left:10.2px;top:390.4px;width:1.8px;height:1px;background:#a9adb2"></div>
<div style="left:7.5px;top:399.3px;width:4.5px;height:1px;background:#a9adb2"></div>
<div style="left:10.2px;top:408.2px;width:1.8px;height:1px;background:#a9adb2"></div>
<div style="left:9.0px;top:417.1px;width:3.0px;height:1px;background:#a9adb2"></div>
<div style="left:10.2px;top:426.0px;width:1.8px;height:1px;background:#a9adb2"></div>
<div style="left:10.2px;top:443.8px;width:1.8px;height:1px;background:#a9adb2"></div>
<div style="left:9.0px;top:452.7px;width:3.0px;height:1px;background:#a9adb2"></div>
<div style="left:10.2px;top:461.6px;width:1.8px;height:1px;background:#a9adb2"></div>
<div style="left:7.5px;top:470.5px;width:4.5px;height:1px;background:#a9adb2"></div>
<div style="left:10.2px;top:479.4px;width:1.8px;height:1px;background:#a9adb2"></div>
<div style="left:9.0px;top:488.3px;width:3.0px;height:1px;background:#a9adb2"></div>
<div style="left:10.2px;top:497.2px;width:1.8px;height:1px;background:#a9adb2"></div>
<div style="left:10.2px;top:515.0px;width:1.8px;height:1px;background:#a9adb2"></div>
<div style="left:9.0px;top:523.9px;width:3.0px;height:1px;background:#a9adb2"></div>
<div style="left:10.2px;top:532.8px;width:1.8px;height:1px;background:#a9adb2"></div>
<div style="left:7.5px;top:541.7px;width:4.5px;height:1px;background:#a9adb2"></div>
<div style="left:10.2px;top:550.6px;width:1.8px;height:1px;background:#a9adb2"></div>
<div style="left:9.0px;top:559.5px;width:3.0px;height:1px;background:#a9adb2"></div>
<div style="left:10.2px;top:568.4px;width:1.8px;height:1px;background:#a9adb2"></div>
<div style="left:10.2px;top:586.2px;width:1.8px;height:1px;background:#a9adb2"></div>
<div style="left:9.0px;top:595.1px;width:3.0px;height:1px;background:#a9adb2"></div>
<div style="left:10.2px;top:604.0px;width:1.8px;height:1px;background:#a9adb2"></div>
<div style="left:7.5px;top:612.9px;width:4.5px;height:1px;background:#a9adb2"></div>
<div style="left:10.2px;top:621.8px;width:1.8px;height:1px;background:#a9adb2"></div>
<div style="left:9.0px;top:630.7px;width:3.0px;height:1px;background:#a9adb2"></div>
<div style="left:10.2px;top:639.6px;width:1.8px;height:1px;background:#a9adb2"></div>
<div style="left:10.2px;top:657.4px;width:1.8px;height:1px;background:#a9adb2"></div>
<div style="left:9.0px;top:666.3px;width:3.0px;height:1px;background:#a9adb2"></div>
<div style="left:10.2px;top:675.2px;width:1.8px;height:1px;background:#a9adb2"></div>
<div style="left:7.5px;top:684.1px;width:4.5px;height:1px;background:#a9adb2"></div>
<div style="left:10.2px;top:693.0px;width:1.8px;height:1px;background:#a9adb2"></div>
<div style="left:9.0px;top:701.9px;width:3.0px;height:1px;background:#a9adb2"></div>
<div style="left:10.2px;top:710.8px;width:1.8px;height:1px;background:#a9adb2"></div>
<div style="left:10.2px;top:728.6px;width:1.8px;height:1px;background:#a9adb2"></div>
<div style="left:9.0px;top:737.5px;width:3.0px;height:1px;background:#a9adb2"></div>
<div style="left:10.2px;top:746.4px;width:1.8px;height:1px;background:#a9adb2"></div>
<div style="left:7.5px;top:755.3px;width:4.5px;height:1px;background:#a9adb2"></div>
<div style="left:10.2px;top:764.2px;width:1.8px;height:1px;background:#a9adb2"></div>
<div style="left:9.0px;top:773.1px;width:3.0px;height:1px;background:#a9adb2"></div>
<span style="left:5.3px;top:221.8px;font-size:7.300px;line-height:8px;color:#5f6368;transform:translate(-50%,-50%) rotate(-90deg)">1</span>
<span style="left:5.3px;top:293.0px;font-size:7.300px;line-height:8px;color:#5f6368;transform:translate(-50%,-50%) rotate(-90deg)">2</span>
<span style="left:5.3px;top:364.2px;font-size:7.300px;line-height:8px;color:#5f6368;transform:translate(-50%,-50%) rotate(-90deg)">3</span>
<span style="left:5.3px;top:435.4px;font-size:7.300px;line-height:8px;color:#5f6368;transform:translate(-50%,-50%) rotate(-90deg)">4</span>
<span style="left:5.3px;top:506.6px;font-size:7.300px;line-height:8px;color:#5f6368;transform:translate(-50%,-50%) rotate(-90deg)">5</span>
<span style="left:5.3px;top:577.8px;font-size:7.300px;line-height:8px;color:#5f6368;transform:translate(-50%,-50%) rotate(-90deg)">6</span>
<span style="left:5.3px;top:649.0px;font-size:7.300px;line-height:8px;color:#5f6368;transform:translate(-50%,-50%) rotate(-90deg)">7</span>
<span style="left:5.3px;top:720.2px;font-size:7.300px;line-height:8px;color:#5f6368;transform:translate(-50%,-50%) rotate(-90deg)">8</span>
<div style="left:24.7px;top:210.7px;width:26px;height:26px;border-radius:50%;background:#e9ebf3"></div>
<svg style="left:31.7px;top:219.7px" width="12" height="8" viewBox="0 0 12 8"><path d="M3 1h8.500M3 4h8.500M3 7h8.500" stroke="#444746" stroke-width="1.300"/><path d="M.3 1h1.300M.3 4h1.300M.3 7h1.300" stroke="#444746" stroke-width="1.300"/></svg>
<div style="left:135.0px;top:198.0px;width:606px;height:579px;overflow:hidden">
<span style="left:202.00px;top:-1px;font-size:13.00px;line-height:normal;color:#cd2029;font-weight:bold;letter-spacing:0.304px;-webkit-text-stroke:.25px #cd2029;">5th Progress meeting-  Agenda</span>
<span style="left:223.00px;top:21px;font-size:14.10px;line-height:normal;font-family:'Liberation Serif',serif;color:#c41f2b;font-weight:bold;font-style:italic;letter-spacing:0.304px;">Thursday, 26th June 2025</span>
<div style="left:71.0px;top:45.0px;width:32px;height:12.500px;background:#ececec"></div>
<span style="left:71.40px;top:45px;font-size:10.60px;line-height:normal;color:#3c3c3c;letter-spacing:0.096px;">Online</span>
<div style="left:71.8px;top:57.0px;width:464.500px;height:74px;border:1px solid #3a3a3a"></div>
<div style="left:77.5px;top:63.5px;width:89px;height:12px;background:#f1f1f1"></div>
<span style="left:77.80px;top:63px;font-size:10.60px;line-height:normal;color:#2a2a2a;letter-spacing:-0.100px;">Join Zoom Meeting</span>
<span style="left:77.80px;top:75px;font-size:10.60px;line-height:normal;color:#2a60ba;letter-spacing:-0.134px;text-decoration:underline;text-decoration-thickness:.8px;text-underline-offset:1px;">https://us06web.zoom.us/j/84744172821?pwd=NtCkqPFjWDgiekEqWtXhSbRRzeOmo5.1</span>
<div style="left:77.5px;top:100.5px;width:124px;height:24.500px;background:#f8f8f8"></div>
<span style="left:77.80px;top:99px;font-size:10.60px;line-height:normal;color:#2a2a2a;letter-spacing:-0.172px;">Meeting ID: 847 4417 2821</span>
<span style="left:77.80px;top:112px;font-size:10.60px;line-height:normal;color:#2a2a2a;letter-spacing:-0.123px;">Passcode: 591722</span>
<div style="left:71.0px;top:154.5px;width:463px;height:15.200px;background:#d5797e"></div>
<span style="left:71.50px;top:155px;font-size:12.20px;line-height:normal;font-family:'Liberation Serif',serif;color:#3a1a1e;letter-spacing:-0.427px;">11:00 – 11:05 <span class="s" style="font-family:'Liberation Sans',sans-serif;font-weight:bold;font-size:11.400px;color:#1a1214;">General overview by coordinators</span></span>
<div style="left:89.8px;top:174.8px;width:5px;height:5px;border-radius:50%;background:#111"></div>
<span style="left:106.60px;top:171px;font-size:11.30px;line-height:normal;color:#1d1d1d;font-style:italic;letter-spacing:-0.432px;">Prof.dr Ramo Šendelj, UDG</span>
<div style="left:71.0px;top:198.2px;width:463px;height:14.800px;background:#d5797e"></div>
<span style="left:71.50px;top:199px;font-size:12.20px;line-height:normal;font-family:'Liberation Serif',serif;color:#3a1a1e;letter-spacing:-0.520px;">11:05-11.45 <span class="s" style="font-family:'Liberation Sans',sans-serif;font-weight:bold;font-size:11.400px;color:#1a1214;">Topics for presentation and discussion:</span></span>
<div style="left:90.0px;top:220.2px;width:3.200px;height:1.4px;background:#111"></div>
<span style="left:107.00px;top:214px;font-size:11.30px;line-height:normal;color:#1d1d1d;font-style:italic;letter-spacing:-0.359px;"><span class="s" style="font-weight:bold;">WP1- Project Management and Quality Control (</span><span class="s" style="text-decoration:underline;text-decoration-thickness:.8px;text-underline-offset:1.500px;">Leader</span>: UDG-Montenegro)</span>
<div style="left:126.0px;top:234.6px;width:3.200px;height:1.0px;background:#666"></div>
<span style="left:143.00px;top:228px;font-size:11.30px;line-height:normal;color:#1d1d1d;font-style:italic;letter-spacing:-0.303px;">T1.1, T1.2 <span class="s" style="color:#302db8;">leader: UDG-Montenegro</span></span>
<div style="left:90.0px;top:249.1px;width:3.200px;height:1.0px;background:#666"></div>
<span style="left:107.00px;top:243px;font-size:11.30px;line-height:normal;color:#1d1d1d;font-style:italic;letter-spacing:-0.549px;"><span class="s" style="font-weight:bold;">WP2 - Establishment of National Cyber Security Framework for </span><span class="s" style="font-weight:bold;text-decoration:underline wavy #e03a3a;text-decoration-thickness:.7px;text-underline-offset:1.500px;">MNE</span><span class="s" style="font-weight:bold;"> HE system</span></span>
<span style="left:107.00px;top:257px;font-size:11.30px;line-height:normal;color:#1d1d1d;font-style:italic;letter-spacing:-0.305px;">(<span class="s" style="text-decoration:underline;text-decoration-thickness:.8px;text-underline-offset:1.500px;">Leader</span>: HFU- Germany, MEdu-Montenegro)</span>
<div style="left:126.0px;top:277.9px;width:3.200px;height:1.0px;background:#666"></div>
<span style="left:143.00px;top:272px;font-size:11.30px;line-height:normal;color:#1d1d1d;font-style:italic;letter-spacing:-0.282px;">T2.3- actions to be done, <span class="s" style="color:#302db8;">UDG-Montenegro</span></span>
<div style="left:90.0px;top:292.4px;width:3.200px;height:1.4px;background:#111"></div>
<span style="left:107.00px;top:286px;font-size:11.30px;line-height:normal;color:#1d1d1d;font-style:italic;letter-spacing:-0.894px;"><span class="s" style="font-weight:bold;">WP3- NATIONAL ACADEMIC CSIRT ESTABLISHMENT</span></span>
<div style="left:126.0px;top:306.8px;width:3.200px;height:1.0px;background:#666"></div>
<span style="left:142.50px;top:301px;font-size:11.30px;line-height:normal;color:#1d1d1d;font-style:italic;letter-spacing:-0.167px;">Workshop in Maribor: 26-27th August 2025</span>
<div style="left:126.0px;top:321.2px;width:3.200px;height:1.0px;background:#666"></div>
<span style="left:142.50px;top:315px;font-size:11.30px;line-height:normal;color:#1d1d1d;font-style:italic;letter-spacing:-0.263px;">T3.1: CSIRT establishment at national level and institutional levels - <span class="s" style="color:#302db8;text-decoration:underline;text-decoration-thickness:.8px;text-underline-offset:1.500px;">leaders</span><span class="s" style="color:#302db8;">:</span></span>
<span style="left:142.50px;top:329px;font-size:11.30px;line-height:normal;color:#1d1d1d;font-style:italic;letter-spacing:-0.414px;"><span class="s" style="color:#302db8;">MEDU, UDG, UCG, UNIM, AUB -Montenegro)</span></span>
<div style="left:90.0px;top:350.1px;width:3.200px;height:1.4px;background:#111"></div>
<span style="left:107.00px;top:344px;font-size:11.30px;line-height:normal;color:#1d1d1d;font-style:italic;letter-spacing:-0.389px;"><span class="s" style="font-weight:bold;">WP10 - Dissemination and Community building (</span><span class="s" style="text-decoration:underline;text-decoration-thickness:.8px;text-underline-offset:1.500px;">Leader</span>: UNIM-Montenegro)</span>
<div style="left:126.0px;top:364.5px;width:3.200px;height:1.0px;background:#666"></div>
<span style="left:142.50px;top:358px;font-size:11.30px;line-height:normal;color:#1d1d1d;font-style:italic;letter-spacing:-0.259px;">T10.3 leader: <span class="s" style="color:#302db8;">AUB-Montenegro</span> (review of reported DISS activities)</span>
<div style="left:126.0px;top:378.9px;width:3.200px;height:1.0px;background:#666"></div>
<span style="left:142.50px;top:373px;font-size:11.30px;line-height:normal;color:#1d1d1d;font-style:italic;letter-spacing:-0.247px;">Newsletter no.2 - preparations - <span class="s" style="color:#302db8;">leader: AGH University of Krakow, Poland</span></span>
<span style="left:142.50px;top:387px;font-size:11.30px;line-height:normal;color:#1d1d1d;font-style:italic;letter-spacing:-0.171px;"><span class="s" style="color:#2a60ba;text-decoration:underline;text-decoration-thickness:.8px;text-underline-offset:1.500px;">https://docs.google.com/document/d/1RVr-VvqrziNUvm-FrGMrfXX2QWZk59Ud/</span></span>
<span style="left:142.50px;top:402px;font-size:11.30px;line-height:normal;color:#1d1d1d;font-style:italic;letter-spacing:-0.030px;"><span class="s" style="color:#2a60ba;text-decoration:underline;text-decoration-thickness:.8px;text-underline-offset:1.500px;">edit</span></span>
<div style="left:126.0px;top:422.2px;width:3.200px;height:1.0px;background:#666"></div>
<span style="left:142.50px;top:416px;font-size:11.30px;line-height:normal;color:#1d1d1d;font-style:italic;letter-spacing:-0.295px;">T10.4: Community Building Events - reports of planned venues are expected by</span>
<span style="left:142.50px;top:430px;font-size:11.30px;line-height:normal;color:#1d1d1d;font-style:italic;letter-spacing:-0.396px;"><span class="s" style="color:#302db8;">AUB, MinEDU, UDG - Montenegro</span></span>
<div style="left:472.6px;top:214.0px;width:1px;height:11px;background:#555"></div>
<div style="left:161.0px;top:451.2px;width:3.200px;height:1.0px;background:#777"></div>
<span style="left:178.00px;top:444px;font-size:12.20px;line-height:normal;font-family:'Liberation Serif',serif;color:#1d1d1d;font-style:italic;word-spacing:3.958px;letter-spacing:-.22px;"><span class="s" style="font-weight:bold;">National Networking Events:</span> come-together for national stakeholders</span>
<span style="left:178.00px;top:458px;font-size:12.20px;line-height:normal;font-family:'Liberation Serif',serif;color:#1d1d1d;font-style:italic;letter-spacing:-0.132px;">identified in the impact plan with 30 external participants <span class="s" style="color:#302db8;">(host: AUB)</span></span>
<div style="left:161.0px;top:478.5px;width:3.200px;height:1.0px;background:#777"></div>
<span style="left:178.00px;top:471px;font-size:12.20px;line-height:normal;font-family:'Liberation Serif',serif;color:#1d1d1d;font-style:italic;word-spacing:4.012px;letter-spacing:-.22px;"><span class="s" style="font-weight:bold;">Sustainability Event:</span> roundtables on selected topics with 20 external</span>
<span style="left:178.00px;top:485px;font-size:12.20px;line-height:normal;font-family:'Liberation Serif',serif;color:#1d1d1d;font-style:italic;letter-spacing:-0.155px;">participants <span class="s" style="color:#302db8;">(host: MinEDU)</span></span>
<div style="left:161.0px;top:505.9px;width:3.200px;height:1.3px;background:#111"></div>
<span style="left:178.00px;top:499px;font-size:12.20px;line-height:normal;font-family:'Liberation Serif',serif;color:#1d1d1d;font-style:italic;word-spacing:0.955px;letter-spacing:-.22px;"><span class="s" style="font-weight:bold;">Annual Project Conference</span> with 100 external participants (50 on-site, 50</span>
<span style="left:178.00px;top:512px;font-size:12.20px;line-height:normal;font-family:'Liberation Serif',serif;color:#1d1d1d;font-style:italic;letter-spacing:-0.165px;">online) <span class="s" style="color:#302db8;">(host: UDG)</span></span>
<div style="left:70.8px;top:525.8px;width:7px;height:14.500px;background:#d0d0d0"></div>
</div>
<div style="left:893.6px;top:291.5px;width:5.500px;height:397px;border-radius:3px;background:#dadce0"></div>
<div style="left:884.5px;top:752.5px;width:20px;height:20px;border-radius:50%;background:#fff;box-shadow:0 0 3px rgba(0,0,0,.35)"></div>
<svg style="left:891.0px;top:758.5px" width="5" height="8" viewBox="0 0 5 8"><path d="M4 1L1 4l3 3" fill="none" stroke="#444746" stroke-width="1.300"/></svg>
</div>
<svg width="0" height="0" style="left:0;top:0"><defs><filter id="b1" x="-20%" y="-20%" width="140%" height="140%"><feGaussianBlur stdDeviation="1"/></filter><filter id="b2" x="-20%" y="-20%" width="140%" height="140%"><feGaussianBlur stdDeviation="2"/></filter><filter id="b4" x="-30%" y="-30%" width="160%" height="160%"><feGaussianBlur stdDeviation="4"/></filter></defs></svg>
<div id="gal">
<div class="tile" style="left:0.0px;top:0.00px"><svg width="160" height="90" viewBox="0 0 160 90"><defs><linearGradient id="g1" x1="0" x2="1"><stop offset="0" stop-color="#bdbdb8"/><stop offset=".55" stop-color="#c8c7c0"/><stop offset=".72" stop-color="#b9b29c"/><stop offset="1" stop-color="#aaa58f"/></linearGradient></defs><rect width="160" height="90" fill="url(#g1)"/><g filter="url(#b2)"><rect x="8" y="20" width="22" height="30" fill="#5c5763"/><rect x="12" y="46" width="18" height="26" fill="#2f5a48"/><rect x="0" y="48" width="16" height="24" fill="#cfd0d0"/><rect x="43" y="12" width="20" height="21" fill="#5b6056"/><rect x="48" y="17" width="10" height="10" fill="#8b9186"/><rect x="148" y="12" width="14" height="58" fill="#636a55"/><rect x="110" y="70" width="50" height="20" fill="#c3bda9"/></g><g filter="url(#b1)"><path d="M58 90c1-17 6-29 17-32l15-4c11 4 18 15 20 36z" fill="#d2d2d5"/><ellipse cx="77.500" cy="36" rx="14.500" ry="17" fill="#3f332a"/><ellipse cx="78.500" cy="44" rx="10.500" ry="14" fill="#c49a8b"/><path d="M64 31c3-9 15-12 25-6-9 0-16 4-21 15z" fill="#3f332a"/><ellipse cx="73" cy="58" rx="7.500" ry="6.500" fill="#c7a092"/><path d="M66 62l14-2 3 16-13 3z" fill="#c39a8b"/><path d="M62 72c2 6 3 12 2 18h10c0-8-1-14-4-20z" fill="#5a4a3a"/></g></svg><div class="nm" style="width:104.0px"></div><svg style="left:4.5px;top:74.3px" width="11" height="13" viewBox="0 0 11 13"><rect x="3.600" y=".5" width="4" height="7" rx="2" fill="#e8384a"/><path d="M1.800 5.800c0 2.300 1.600 3.700 3.800 3.700s3.800-1.400 3.800-3.700M5.600 9.600v2.200M3.600 12h4" fill="none" stroke="#e8384a" stroke-width="1.100" stroke-linecap="round"/><path d="M1.200 11.800L9.800.8" stroke="#e8384a" stroke-width="1.500" stroke-linecap="round"/></svg><span style="left:20.10px;top:75px;font-size:10.60px;line-height:normal;color:#fff;letter-spacing:0.071px;">Ivana Ognjanović</span></div>
<div class="tile" style="left:160.2px;top:0.00px"><svg width="160" height="90" viewBox="0 0 160 90"><defs><linearGradient id="g2" x1="0" x2="1"><stop offset="0" stop-color="#c6d0d8"/><stop offset=".045" stop-color="#c0c9d0"/><stop offset=".06" stop-color="#7f8588"/><stop offset=".085" stop-color="#8d9092"/><stop offset=".1" stop-color="#bcbcb8"/><stop offset=".4" stop-color="#c4c4bf"/><stop offset=".6" stop-color="#d2d2cd"/><stop offset="1" stop-color="#c9c9c6"/></linearGradient></defs><rect width="160" height="90" fill="url(#g2)"/><g filter="url(#b4)"><rect x="66" y="5" width="34" height="40" fill="#dadad5"/><ellipse cx="78" cy="43" rx="5" ry="7" fill="#8a4a4c"/><rect x="20" y="52" width="60" height="20" fill="#d2d2d0"/></g><g filter="url(#b2)"><ellipse cx="90" cy="62" rx="11" ry="11" fill="#3b4048"/></g><g filter="url(#b1)"><path d="M76 90c4-14 10-26 20-32l64-6v38z" fill="#e9edf3"/><path d="M112 0h48v60l-26 30H97c-2-12 2-24 6-34-2-24 0-44 9-56z" fill="#2b2226"/><path d="M128 14c6-8 22-8 28 0l1 30c-3 10-9 16-17 18-7-3-11-12-12-24z" fill="#d4a997"/><path d="M126 30c-2-12 4-22 16-22-8 6-10 18-9 34z" fill="#2b2226"/><rect x="153" y="16" width="6" height="25" rx="3" fill="#111"/><path d="M128 62l14 2 18-4v30h-35c4-10 5-18 3-28z" fill="#eef1f6"/><path d="M118 50c6 10 8 26 4 40h-22c0-14 6-30 18-40z" fill="#2b2226"/></g></svg><div class="nm" style="width:86.5px"></div><svg style="left:4.5px;top:74.3px" width="11" height="13" viewBox="0 0 11 13"><rect x="3.600" y=".5" width="4" height="7" rx="2" fill="#e8384a"/><path d="M1.800 5.800c0 2.300 1.600 3.700 3.800 3.700s3.800-1.400 3.800-3.700M5.600 9.600v2.200M3.600 12h4" fill="none" stroke="#e8384a" stroke-width="1.100" stroke-linecap="round"/><path d="M1.200 11.800L9.800.8" stroke="#e8384a" stroke-width="1.500" stroke-linecap="round"/></svg><span style="left:20.10px;top:75px;font-size:10.60px;line-height:normal;color:#fff;letter-spacing:0.037px;">Milena Ljutica</span></div>
<div class="tile" style="left:0.0px;top:89.85px"><svg width="160" height="90" viewBox="0 0 160 90"><rect width="160" height="90" fill="#f6f6f6"/><rect width="5" height="90" fill="#d9d9d9"/><g filter="url(#b2)"><rect x="100" y="0" width="60" height="40" fill="#e6ecee"/><path d="M42 -1l8 0 22 13-6 3z" fill="#9fb0ba"/></g><g filter="url(#b1)"><path d="M126.500 47.500L160 37v27l-28.500 4.500z" fill="#3f5c5c"/><path d="M131 50.500L157 43v18l-23 4z" fill="#4a86d6"/><path d="M138 60c2-8 9-13 19-13v6c-7 1-11 4-13 10z" fill="#9cc3ea"/><path d="M96 76c14-8 34-8 44 2l4 12H96z" fill="#ebebee"/><path d="M92 6c12-6 22 6 26 24 4 16 10 30 4 42-6 4-14 2-16-6 2-20-4-40-14-60z" fill="#6e5443"/><ellipse cx="88" cy="33" rx="32" ry="30" fill="#b3a28c"/><path d="M60 30c8-20 36-26 50-8-14 4-26 12-32 26z" fill="#c6b8a3"/><path d="M57 56c0-14 12-21 28-19 12 2 20 10 22 24 1 12-2 21-8 29H66c-6-9-9-21-9-34z" fill="#b2866a"/><path d="M59 48c6-9 18-12 30-10-14 2-24 9-28 20z" fill="#c3a386"/><path d="M70 62c6-2 14-1 20 2" stroke="#8a6450" stroke-width="1.500" fill="none"/></g></svg><div class="nm" style="width:95.0px"></div><svg style="left:4.5px;top:74.3px" width="11" height="13" viewBox="0 0 11 13"><rect x="3.600" y=".5" width="4" height="7" rx="2" fill="#e8384a"/><path d="M1.800 5.800c0 2.300 1.600 3.700 3.800 3.700s3.800-1.400 3.800-3.700M5.600 9.600v2.200M3.600 12h4" fill="none" stroke="#e8384a" stroke-width="1.100" stroke-linecap="round"/><path d="M1.200 11.800L9.800.8" stroke="#e8384a" stroke-width="1.500" stroke-linecap="round"/></svg><span style="left:20.10px;top:75px;font-size:10.60px;line-height:normal;color:#fff;letter-spacing:0.066px;">Marija Jankovic</span></div>
<div class="tile" style="left:160.2px;top:89.85px"><svg width="160" height="90" viewBox="0 0 160 90"><rect width="160" height="90" fill="#f3f3f3"/><g filter="url(#b4)"><rect x="-4" y="-4" width="26" height="98" fill="#b9b198"/><rect x="4" y="10" width="12" height="60" fill="#d3ccb6"/><path d="M20 -4h14l-4 40-8 44H14z" fill="#262626"/><rect x="24" y="-6" width="92" height="13" fill="#303030"/><rect x="100" y="-4" width="18" height="22" fill="#5a5a5a"/></g><g filter="url(#b1)"><path d="M48 90c2-12 12-20 30-23l28-2c20 2 32 10 36 25z" fill="#c6c9c5"/><ellipse cx="90" cy="40" rx="18" ry="25" fill="#9c958f"/><path d="M74 44c0-20 8-28 17-28s16 8 16 28c0 16-6 26-16 26s-17-10-17-26z" fill="#ba917d"/><ellipse cx="90" cy="26" rx="12" ry="8" fill="#d2a892"/><path d="M75 40h31v8H75z" fill="#9c8f92" opacity=".7"/><path d="M82 64h18l4 26H80z" fill="#a98674"/><path d="M98 68l10 22h-8z" fill="#8f9aa8"/></g></svg><div class="nm" style="width:96.0px"></div><svg style="left:4.5px;top:74.3px" width="11" height="13" viewBox="0 0 11 13"><rect x="3.600" y=".5" width="4" height="7" rx="2" fill="#e8384a"/><path d="M1.800 5.800c0 2.300 1.600 3.700 3.800 3.700s3.800-1.400 3.800-3.700M5.600 9.600v2.200M3.600 12h4" fill="none" stroke="#e8384a" stroke-width="1.100" stroke-linecap="round"/><path d="M1.200 11.800L9.800.8" stroke="#e8384a" stroke-width="1.500" stroke-linecap="round"/></svg><span style="left:20.10px;top:75px;font-size:10.60px;line-height:normal;color:#fff;letter-spacing:-0.025px;">Christoph Reich</span></div>
<div class="tile" style="left:0.0px;top:179.70px"><svg width="160" height="90" viewBox="0 0 160 90"><rect width="160" height="90" fill="#c4ab98"/><g filter="url(#b2)"><path d="M-4 -4h168v26l-36 24H8l-12-10z" fill="#d5dae0"/><path d="M126 46l38-26v74h-38z" fill="#e3e0dc"/><rect x="40" y="46" width="23" height="48" fill="#dccdc6"/><path d="M-2 34l12 10v34H-2z" fill="#6a4a35"/><rect x="0" y="60" width="6" height="12" fill="#5a8a5a"/><path d="M126 58l12-10" stroke="#8a6a58" stroke-width="1.500"/></g><g filter="url(#b1)"><path d="M96 74c20-6 40 0 50 16H92z" fill="#9aa1af"/><ellipse cx="83.500" cy="34" rx="25" ry="23" fill="#4b4541"/><path d="M57 56c0-18 10-30 27-30s27 12 27 30c0 22-10 38-27 38S57 78 57 56z" fill="#a9806e"/><path d="M62 36c6-8 34-10 44 0-12-4-32-4-44 0z" fill="#4b4541"/><rect x="62" y="41.500" width="46" height="10.500" rx="3" fill="#b9a8a2" opacity=".75"/><path d="M61 42h48" stroke="#5a4a44" stroke-width="1.300"/><path d="M74 72c6 4 16 4 22 0l-2 12H76z" fill="#8a6052"/></g></svg><div class="nm" style="width:90.5px"></div><svg style="left:4.5px;top:74.3px" width="11" height="13" viewBox="0 0 11 13"><rect x="3.600" y=".5" width="4" height="7" rx="2" fill="#e8384a"/><path d="M1.800 5.800c0 2.300 1.600 3.700 3.800 3.700s3.800-1.400 3.800-3.700M5.600 9.600v2.200M3.600 12h4" fill="none" stroke="#e8384a" stroke-width="1.100" stroke-linecap="round"/><path d="M1.200 11.800L9.800.8" stroke="#e8384a" stroke-width="1.500" stroke-linecap="round"/></svg><span style="left:20.10px;top:75px;font-size:10.60px;line-height:normal;color:#fff;letter-spacing:0.172px;">Oliver Popović</span></div>
<div class="tile" style="left:160.2px;top:179.70px"><svg width="160" height="90" viewBox="0 0 160 90"><rect width="160" height="90" fill="#e6e1d3"/><rect x="0" y="0" width="4.500" height="90" fill="#1d2a3a"/><g filter="url(#b1)"><rect x="41" y="0" width="53" height="31" fill="#2e2926"/><path d="M47 6c4-3 10-3 14 0l-3 6c2 4 0 8-3 9-3-3-7-8-8-15zM64 5c8-4 18-4 24 0l-2 8-6 2-2 10c-4-2-5-8-6-12-4 0-7-3-8-8zM84 20c2-2 5-2 7 0-1 3-5 4-7 0zM53 17c2 0 4 3 3 7-2 0-4-4-3-7z" fill="#efece6"/><rect x="136" y="72" width="26" height="20" fill="#cfc1a2"/><ellipse cx="146" cy="58" rx="12.500" ry="11" fill="#8b3247"/><ellipse cx="142" cy="54" rx="6" ry="5" fill="#b05068"/><path d="M152 50l8-3v14z" fill="#4b5a36"/><rect x="140" y="64" width="10" height="8" rx="2" fill="#d8a3a3"/><path d="M20 90c2-15 10-32 25-40l30-1c11 4 18 11 20 20l-3 21z" fill="#c9d2df"/><path d="M50 54l10 12 14-14-2 30H56z" fill="#d9dfe8"/><path d="M47 37c0-13 6-18 15-18s14 6 14 18c0 13-6 21-14 21s-15-8-15-21z" fill="#c09881"/><path d="M50 28c2-6 20-8 25 2-6-4-18-5-25-2z" fill="#3b3733"/><path d="M52 22c4-3 16-3 21 2l2 8c-6-6-18-7-25-2z" fill="#3b3733"/><path d="M46 34.500h28" stroke="#5b5350" stroke-width=".9"/><ellipse cx="53" cy="47" rx="2.500" ry="1.500" fill="#7b3b3b"/></g><rect x="1" y="1" width="158" height="87.500" fill="none" stroke="#24d18d" stroke-width="2"/></svg><div class="nm" style="width:72.0px"></div><span style="left:5.20px;top:75px;font-size:10.60px;line-height:normal;color:#fff;letter-spacing:-0.062px;">Ramo Sendelj</span></div>
<div class="tile" style="left:0.0px;top:269.55px"><svg width="160" height="90" viewBox="0 0 160 90"><defs><linearGradient id="g7" x1="0" y1="0" x2="0" y2="1"><stop offset="0" stop-color="#d9d9bd"/><stop offset=".6" stop-color="#d6d6c0"/><stop offset="1" stop-color="#cdcdbf"/></linearGradient></defs><rect width="160" height="90" fill="url(#g7)"/><g filter="url(#b4)"><rect x="28" y="60" width="34" height="18" fill="#c3ccca"/><rect x="0" y="0" width="160" height="6" fill="#cfcfb6"/></g><g filter="url(#b2)"><ellipse cx="45" cy="35" rx="2" ry="5" fill="#b3b399"/></g><g filter="url(#b1)"><ellipse cx="96.500" cy="48" rx="18" ry="16" fill="#3a2f27"/><path d="M80 62c0-10 6-14 15-14s16 5 16 14c0 14-6 28-16 28s-15-14-15-28z" fill="#b08772"/><path d="M80 56c4-8 24-10 32-2-10-2-22-1-32 2z" fill="#3a2f27"/><path d="M84 70c6 2 14 2 20 0l-4 10H88z" fill="#9a6e5e"/></g></svg><div class="nm" style="width:155.5px"></div><svg style="left:4.5px;top:74.3px" width="11" height="13" viewBox="0 0 11 13"><rect x="3.600" y=".5" width="4" height="7" rx="2" fill="#e8384a"/><path d="M1.800 5.800c0 2.300 1.600 3.700 3.800 3.700s3.800-1.400 3.800-3.700M5.600 9.600v2.200M3.600 12h4" fill="none" stroke="#e8384a" stroke-width="1.100" stroke-linecap="round"/><path d="M1.200 11.800L9.800.8" stroke="#e8384a" stroke-width="1.500" stroke-linecap="round"/></svg><span style="left:20.10px;top:75px;font-size:10.60px;line-height:normal;color:#fff;letter-spacing:-0.081px;">Jelena Terzić jelena@ucg.a...</span></div>
<div class="tile" style="left:160.2px;top:269.55px"><svg width="160" height="90" viewBox="0 0 160 90"><defs><linearGradient id="g8" x1="0" y1="0" x2=".3" y2="1"><stop offset="0" stop-color="#a7aeae"/><stop offset=".5" stop-color="#b9bec2"/><stop offset="1" stop-color="#cdd0d6"/></linearGradient></defs><rect width="160" height="90" fill="url(#g8)"/><rect x="134" y="0" width="26" height="90" fill="#c3c7cb"/><g filter="url(#b1)"><path d="M68 84c20-7 62-7 94-2v10H68z" fill="#aea779"/><path d="M76 32c0-24 12-34 30-34s30 10 30 36c2 16 9 30 11 58H80c2-22-4-40-4-60z" fill="#382e2b"/><path d="M81 38c0-22 10-33 25-33s25 11 25 33c0 24-10 46-25 46S81 62 81 38z" fill="#bc9c8c"/><path d="M80 32c3-20 13-29 27-29-10 6-19 17-23 36z" fill="#382e2b"/><path d="M132 32c-2-16-10-26-24-29 9 5 16 15 19 32z" fill="#382e2b"/><ellipse cx="106" cy="20" rx="16" ry="9" fill="#c6a696"/><path d="M86 27c5-3 11-3 16 0M110 27c5-3 11-3 16 0" stroke="#33272a" stroke-width="2" fill="none"/><ellipse cx="94" cy="33" rx="5" ry="2.200" fill="#3d2f30"/><ellipse cx="118" cy="33" rx="5" ry="2.200" fill="#3d2f30"/><path d="M105 34l-4 17c3 2 8 2 11 0z" fill="#ab8c7e"/><path d="M96 63c6-2 14-2 20 0-6 3-14 3-20 0z" fill="#8f6a66"/><path d="M84 50c2 16 10 30 22 34-14 0-22-14-24-30z" fill="#9f8274"/></g><rect x="0" y="0" width="160" height="1.200" fill="#24d18d"/></svg><div class="nm" style="width:130.5px"></div><svg style="left:4.5px;top:74.3px" width="11" height="13" viewBox="0 0 11 13"><rect x="3.600" y=".5" width="4" height="7" rx="2" fill="#e8384a"/><path d="M1.800 5.800c0 2.300 1.600 3.700 3.800 3.700s3.800-1.400 3.800-3.700M5.600 9.600v2.200M3.600 12h4" fill="none" stroke="#e8384a" stroke-width="1.100" stroke-linecap="round"/><path d="M1.200 11.800L9.800.8" stroke="#e8384a" stroke-width="1.500" stroke-linecap="round"/></svg><span style="left:20.10px;top:75px;font-size:10.60px;line-height:normal;color:#fff;letter-spacing:-0.035px;">AKOKVO - Ana Rutović</span></div>
<div class="tile" style="left:0.0px;top:359.40px"><span style="left:26.60px;top:39px;font-size:12.40px;line-height:normal;color:#fff;font-weight:bold;letter-spacing:0.070px;">read.ai  meeting...</span><div class="nm" style="width:112.0px"></div><span style="left:5.20px;top:75px;font-size:10.60px;line-height:normal;color:#fff;letter-spacing:0.172px;">read.ai meeting notes</span></div>
<div class="tile" style="left:160.2px;top:359.40px"><span style="left:27.00px;top:39px;font-size:12.40px;line-height:normal;color:#fff;font-weight:bold;letter-spacing:-0.012px;">Fireflies.ai  Note...</span><div class="nm" style="width:147.0px"></div><svg style="left:4.5px;top:74.3px" width="11" height="13" viewBox="0 0 11 13"><rect x="3.600" y=".5" width="4" height="7" rx="2" fill="#e8384a"/><path d="M1.800 5.800c0 2.300 1.600 3.700 3.800 3.700s3.800-1.400 3.800-3.700M5.600 9.600v2.200M3.600 12h4" fill="none" stroke="#e8384a" stroke-width="1.100" stroke-linecap="round"/><path d="M1.200 11.800L9.800.8" stroke="#e8384a" stroke-width="1.500" stroke-linecap="round"/></svg><span style="left:20.10px;top:75px;font-size:10.60px;line-height:normal;color:#fff;letter-spacing:0.035px;">Fireflies.ai Notetaker Jerzy</span></div>
<div class="tile" style="left:0.0px;top:449.25px"><span style="left:26.60px;top:39px;font-size:12.40px;line-height:normal;color:#fff;font-weight:bold;letter-spacing:0.064px;">Jurek AGH Krak...</span><div class="nm" style="width:95.0px"></div><span style="left:5.20px;top:75px;font-size:10.60px;line-height:normal;color:#fff;letter-spacing:0.000px;">Jurek AGH Krakow</span></div>
<div class="tile" style="left:160.2px;top:449.25px"><svg width="160" height="90" viewBox="0 0 160 90"><defs><clipPath id="c12"><rect x="46.500" y="11" width="65.500" height="68" rx="5"/></clipPath></defs><g clip-path="url(#c12)"><rect x="40" y="5" width="80" height="80" fill="#d5a482"/><g filter="url(#b2)"><path d="M40 5h80v14c-8-6-20-6-30-4-14 0-30 6-42 22l-8 6z" fill="#2a2019"/><path d="M104 14l18 0v72h-12c4-20 2-50-6-72z" fill="#2b211b"/><path d="M40 40l8-6v52h-8z" fill="#3a2a20"/><ellipse cx="78" cy="50" rx="22" ry="18" fill="#e0b090"/><path d="M70 70c10-6 26-4 34 4v12H66z" fill="#a48d80"/><path d="M98 40l14 0v46H96c4-14 4-30 2-46z" fill="#7a5a48" opacity=".6"/><ellipse cx="86" cy="76" rx="6" ry="2.500" fill="#b8525a"/></g><g filter="url(#b1)"><path d="M52 27c8-4 18-3 24 2M88 34c6-4 14-3 18 0" stroke="#2a1d16" stroke-width="2.600" fill="none"/><ellipse cx="68" cy="38" rx="3.500" ry="2" fill="#3a2a24"/><ellipse cx="96" cy="44" rx="3.500" ry="2" fill="#3a2a24"/><path d="M58 33l24 5-1 11-20-3zM90 41l18 3-1 13-17-4z" fill="#e8c6c0" fill-opacity=".35" stroke="#6b4038" stroke-width="1"/><path d="M82 38l8 3M47 31l11 2" stroke="#6b4038" stroke-width="1"/><path d="M84 48c-2 8-4 12-2 16 4 2 8 1 10-2" fill="none" stroke="#b98466" stroke-width="1.500"/></g></g></svg><div class="nm" style="width:76.5px"></div><svg style="left:4.5px;top:74.3px" width="11" height="13" viewBox="0 0 11 13"><rect x="3.600" y=".5" width="4" height="7" rx="2" fill="#e8384a"/><path d="M1.800 5.800c0 2.300 1.600 3.700 3.800 3.700s3.800-1.400 3.800-3.700M5.600 9.600v2.200M3.600 12h4" fill="none" stroke="#e8384a" stroke-width="1.100" stroke-linecap="round"/><path d="M1.200 11.800L9.800.8" stroke="#e8384a" stroke-width="1.500" stroke-linecap="round"/></svg><span style="left:20.10px;top:75px;font-size:10.60px;line-height:normal;color:#fff;letter-spacing:-0.124px;">Slavko Gajin</span></div>
</div>
<div style="left:1272px;top:441px;width:2.500px;height:20px;background:#9a9a9a;border-radius:1px"></div>
<span style="left:1332.80px;top:790px;font-size:15.90px;line-height:normal;color:#7d7d7d;letter-spacing:0.318px;">Activate Windows</span>
<span style="left:1332.80px;top:810px;font-size:11.80px;line-height:normal;color:#707070;letter-spacing:0.294px;z-index:5;">Go to Settings to activate Windows.</span>
<div id="zbar">
<svg style="left:34px;top:8px" width="20" height="22" viewBox="0 0 20 22"><g class="ic" stroke-width="1.400"><rect x="7" y="2" width="6" height="10.500" rx="3"/><path d="M4.500 10.500c0 3.100 2.400 5.200 5.500 5.200s5.500-2.100 5.500-5.200M10 15.900v3.300M6.800 19.400h6.400"/></g><path d="M1.500 17L17.500 1.500" stroke="#e8284f" stroke-width="1.800" stroke-linecap="round"/></svg>
<span style="left:30.50px;top:32px;font-size:9.70px;line-height:normal;color:#e4e4e4;letter-spacing:0.244px;-webkit-text-stroke:.25px #e4e4e4;">Audio</span>
<svg style="left:66.500px;top:16.500px" width="7" height="5" viewBox="0 0 7 5"><path class="ic" stroke-width="1.500" d="M.8 3.800L3.500 1.100l2.700 2.700"/></svg>
<svg style="left:110.500px;top:12.500px" width="21" height="13" viewBox="0 0 21 13"><g class="ic" stroke-width="1.400"><rect x=".8" y=".8" width="12.500" height="11" rx="3"/><path d="M13.800 4.700l5.200-2.800v8.800l-5.200-2.800z"/></g></svg>
<span style="left:107.50px;top:32px;font-size:9.70px;line-height:normal;color:#e4e4e4;letter-spacing:0.178px;-webkit-text-stroke:.25px #e4e4e4;">Video</span>
<svg style="left:147.500px;top:16.500px" width="7" height="5" viewBox="0 0 7 5"><path class="ic" stroke-width="1.500" d="M.8 3.800L3.500 1.100l2.700 2.700"/></svg>
<svg style="left:535.500px;top:11.500px" width="17" height="16" viewBox="0 0 17 16"><g class="ic" stroke-width="1.300"><circle cx="5.200" cy="3.300" r="2.300"/><circle cx="11.800" cy="5.200" r="1.900"/><path d="M1 13.500c0-3 1.700-4.800 4.200-4.800s4.200 1.800 4.200 4.800c0 .8-.4 1.200-1.200 1.200h-6c-.8 0-1.200-.4-1.200-1.200z"/><path d="M11.200 14.700h3.800c.7 0 1-.4 1-1.100 0-2.400-1.500-4-3.700-4-.6 0-1.100.1-1.600.4"/></g></svg>
<span style="left:557.40px;top:12px;font-size:9.60px;line-height:normal;color:#cfcfcf;letter-spacing:-0.836px;">12</span>
<span style="left:518.00px;top:32px;font-size:9.70px;line-height:normal;color:#e4e4e4;letter-spacing:0.048px;-webkit-text-stroke:.25px #e4e4e4;">Participants</span>
<svg style="left:583.500px;top:16.500px" width="7" height="5" viewBox="0 0 7 5"><path class="ic" stroke-width="1.500" d="M.8 3.800L3.500 1.100l2.700 2.700"/></svg>
<svg style="left:625px;top:9.500px" width="17" height="19" viewBox="0 0 17 19"><g class="ic" stroke-width="1.300"><path d="M3.500 5.500V4.200a3 3 0 0 1 3-3h6.500a3 3 0 0 1 3 3v4.600a3 3 0 0 1-1.800 2.700"/><path d="M3.700 5.800h7.600a2.700 2.700 0 0 1 2.700 2.700v4.200a2.700 2.700 0 0 1-2.700 2.700h-4.500l-2.600 2.400c-.5.400-1 .2-1-.4v-2.200a2.700 2.700 0 0 1-2.200-2.600v-4.100a2.700 2.700 0 0 1 2.700-2.700z" fill="#000"/></g><circle cx="4.800" cy="10.600" r=".9" fill="currentColor"/><circle cx="7.600" cy="10.600" r=".9" fill="currentColor"/><circle cx="10.400" cy="10.600" r=".9" fill="currentColor"/></svg>
<div style="left:639.500px;top:8px;width:12px;height:12px;border-radius:50%;background:#e8384a"></div>
<span style="left:645.50px;top:9px;font-size:8.50px;line-height:normal;color:#fff;font-weight:bold;transform:translateX(-50%);">1</span>
<span style="left:625.00px;top:32px;font-size:9.70px;line-height:normal;color:#e4e4e4;letter-spacing:-0.217px;-webkit-text-stroke:.25px #e4e4e4;">Chat</span>
<svg style="left:658.500px;top:16.500px" width="7" height="5" viewBox="0 0 7 5"><path class="ic" stroke-width="1.500" d="M.8 3.800L3.500 1.100l2.700 2.700"/></svg>
<svg style="left:695px;top:10px" width="22" height="18" viewBox="0 0 22 18"><path class="ic" stroke-width="1.300" d="M10.600 4.200C9 1 5.500.2 3.200 1.800.9 3.500.6 6.700 2.800 9.400c2 2.400 5 5 8.500 7.300 4-1.700 7.300-4 9-6.800 1.600-2.700.8-5.700-1.500-6.900-2.400-1.200-5.600-.4-8.200 1.200z"/></svg>
<span style="left:693.60px;top:32px;font-size:9.70px;line-height:normal;color:#e4e4e4;letter-spacing:-0.263px;-webkit-text-stroke:.25px #e4e4e4;">React</span>
<div style="left:770px;top:11px;width:20px;height:16px;border-radius:3px;background:#1fdc8b"></div>
<svg style="left:775px;top:13.500px" width="10" height="11" viewBox="0 0 10 11"><path d="M5 10V2M1.500 5.200L5 1.600l3.500 3.600" fill="none" stroke="#06301c" stroke-width="2" stroke-linecap="round" stroke-linejoin="round"/></svg>
<span style="left:768.00px;top:32px;font-size:9.70px;line-height:normal;color:#e4e4e4;letter-spacing:-0.252px;-webkit-text-stroke:.25px #e4e4e4;">Share</span>
<svg style="left:849.500px;top:9px" width="20" height="19" viewBox="0 0 20 19"><defs><linearGradient id="aig" x1="0" y1="0" x2="1" y2="1"><stop offset="0" stop-color="#ffffff"/><stop offset="1" stop-color="#9fd0e6"/></linearGradient></defs><path fill="url(#aig)" d="M8 2.200c1.300 4.400 3.600 6.700 8 8-4.400 1.300-6.700 3.600-8 8-1.300-4.400-3.600-6.700-8-8 4.400-1.300 6.700-3.600 8-8z" stroke="url(#aig)" stroke-width="1.200" stroke-linejoin="round"/><path fill="#fff" d="M16 .5c.4 2 1.200 2.800 3.200 3.200-2 .4-2.800 1.200-3.200 3.200-.4-2-1.200-2.800-3.200-3.200 2-.4 2.800-1.200 3.200-3.200z"/></svg>
<span style="left:827.60px;top:32px;font-size:9.70px;line-height:normal;color:#e4e4e4;letter-spacing:0.209px;-webkit-text-stroke:.25px #e4e4e4;">AI Companion</span>
<svg style="left:928px;top:8.500px" width="21" height="21" viewBox="0 0 21 21"><circle class="ic" stroke-width="1.300" cx="10.500" cy="10.500" r="9.600"/><circle cx="10.500" cy="6.300" r="1.100" fill="currentColor"/><path class="ic" stroke-width="1.500" d="M8.800 9.500h1.900v5.500M8.500 15.200h4.200"/></svg>
<span style="left:911.40px;top:32px;font-size:9.70px;line-height:normal;color:#e4e4e4;letter-spacing:0.277px;-webkit-text-stroke:.25px #e4e4e4;">Meeting info</span>
<svg style="left:1003.500px;top:10px" width="19" height="19" viewBox="0 0 19 19"><g class="ic" stroke-width="1.300"><circle cx="14.300" cy="4.300" r="3.200"/><circle cx="4.700" cy="14.300" r="3.200"/><path d="M1.500 7.500V4.500a3 3 0 0 1 3-3h3M17.500 11.500v3a3 3 0 0 1-3 3h-3"/></g></svg>
<span style="left:1002.00px;top:32px;font-size:9.70px;line-height:normal;color:#e4e4e4;letter-spacing:-0.023px;-webkit-text-stroke:.25px #e4e4e4;">Apps</span>
<svg style="left:1078px;top:9px" width="19" height="21" viewBox="0 0 19 21"><g class="ic" stroke-width="1.300"><path d="M3.500 1h10a1.800 1.800 0 0 1 1.800 1.800v11M11 18.500H3.500a1.800 1.800 0 0 1-1.800-1.800V2.800A1.800 1.800 0 0 1 3.500 1"/><path d="M6 5.500h6.500M6 8.800h4.500M.6 4.500h2M.6 8h2M.6 11.500h2M.6 15h2"/></g><rect x="9" y="15.500" width="9.500" height="4" rx="2" fill="#fff"/></svg>
<span style="left:1074.60px;top:32px;font-size:9.70px;line-height:normal;color:#e4e4e4;letter-spacing:0.018px;-webkit-text-stroke:.25px #e4e4e4;">Notes</span>
<svg style="left:1153px;top:8.500px" width="21" height="21" viewBox="0 0 21 21"><circle class="ic" stroke-width="1.300" cx="10.500" cy="10.500" r="9.600"/><circle cx="6.200" cy="10.500" r="1.200" fill="currentColor"/><circle cx="10.500" cy="10.500" r="1.200" fill="currentColor"/><circle cx="14.800" cy="10.500" r="1.200" fill="currentColor"/></svg>
<span style="left:1152.00px;top:32px;font-size:9.70px;line-height:normal;color:#e4e4e4;letter-spacing:0.280px;-webkit-text-stroke:.25px #e4e4e4;">More</span>
<svg style="left:1550px;top:8px" width="22" height="21" viewBox="0 0 22 21"><path d="M12.500 3.500l6.500-2.300v16l-6.500 2.300z" fill="none" stroke="#e8284f" stroke-width="1.300" stroke-linejoin="round"/><path d="M19 1.500h1.800v15.500H19" fill="none" stroke="#e8284f" stroke-width="1.100"/><g class="ic" stroke-width="1.300"><circle cx="7.300" cy="4.600" r="2"/><path d="M5.300 8.200c1-1 2.600-1.200 3.500-.2l1.200 2.600 1.800 1M5.300 8.200l-2 1.600-.6 2.600M5.300 8.200l-.3 4.300 2.600 2.200.6 3.800M4.800 13.300l-1.300 2.800-2.300 2.300"/></g></svg>
<span style="left:1548.00px;top:32px;font-size:9.70px;line-height:normal;color:#e4e4e4;letter-spacing:-0.361px;-webkit-text-stroke:.25px #e4e4e4;">Leave</span>
</div>
<div id="task">
<svg style="left:12px;top:9.500px" width="15" height="15" viewBox="0 0 15 15" fill="#fff"><path d="M0 2.100l6.100-.85v5.900H0zM6.900 1.150L15 0v7.150H6.900zM0 7.900h6.100v5.900L0 12.950zM6.900 7.900H15V15l-8.100-1.150z"/></svg>
<div style="left:40px;top:0;width:287px;height:34px;background:#f1f1f1"></div>
<svg style="left:50px;top:9px" width="14" height="15" viewBox="0 0 14 15"><circle cx="8.500" cy="5.500" r="4.300" fill="none" stroke="#333" stroke-width="1.200"/><path d="M5.400 8.700L1 13.600" stroke="#333" stroke-width="1.300" stroke-linecap="round"/></svg>
<span style="left:73.50px;top:9px;font-size:12.80px;line-height:normal;color:#444;letter-spacing:-0.348px;">Type here to search</span>
<div style="left:263px;top:4px;width:62px;height:30px;overflow:hidden"><div style="left:0;top:6px;width:18px;height:22px;border-radius:9px;background:#3f63d8"></div><div style="left:44px;top:6px;width:18px;height:22px;border-radius:9px;background:#8a55d8"></div><div style="left:10px;top:0;width:22px;height:24px;border-radius:11px 11px 4px 4px;background:#5b7be6"></div><div style="left:30px;top:0;width:22px;height:24px;border-radius:11px 11px 4px 4px;background:#6a5ce0"></div><div style="left:17px;top:6px;width:28px;height:3px;background:#a9c6f5"></div><div style="left:17px;top:6px;width:3px;height:20px;background:#7aa2ee"></div><div style="left:42px;top:6px;width:3px;height:20px;background:#7aa2ee"></div><div style="left:19px;top:8px;width:24px;height:16px;background:#2f4fb8"></div><div style="left:25px;top:13px;width:12px;height:12px;border-radius:2px;background:#e8d9b8;transform:rotate(45deg)"></div><div style="left:2px;top:22px;width:58px;height:8px;border-radius:4px;background:linear-gradient(90deg,#66c27a,#e68fb0 25%,#f3c96a 45%,#8fd0e8 65%,#d98ad6 85%,#6dc88a)"></div></div>
<svg style="left:338px;top:8px" width="17" height="17" viewBox="0 0 17 17"><circle cx="8.500" cy="8.500" r="6.200" fill="none" stroke="#fff" stroke-width="1.800"/></svg>
<svg style="left:378px;top:9px" width="16" height="16" viewBox="0 0 16 16" fill="none" stroke="#fff" stroke-width="1.200"><rect x="1.600" y="3.600" width="8.800" height="8.800"/><path d="M1 .8h10M1 15.200h10"/><path d="M13.500 1v3M13.500 6.500v3M13.500 12v3" stroke-width="1.600"/></svg>
<div class="ti" style="left:417px;border-radius:50%;background:conic-gradient(from 200deg,#1b6fd0,#2fc5d8 35%,#58d86b 55%,#1f8ad8 75%,#14509e)"></div><div style="left:424px;top:15px;width:10px;height:9px;border-radius:50%;background:#1c2c3c"></div>
<div style="left:459px;top:8px;width:20px;height:7px;border-radius:2px 2px 0 0;background:#e8b43a"></div><div style="left:459px;top:12px;width:20px;height:15px;border-radius:1px;background:#f6cf57"></div><div style="left:463px;top:20px;width:12px;height:7px;background:#4a88d6"></div>
<div class="run" style="left:453px"></div>
<div style="left:505px;top:6px;width:10px;height:6px;border:1.500px solid #38a0dc;border-bottom:0;border-radius:4px 4px 0 0"></div><div style="left:500px;top:10px;width:20px;height:18px;border-radius:2px;background:#f3f3f3"></div><div style="left:506px;top:14px;width:4px;height:4px;background:#e8483a"></div><div style="left:511px;top:14px;width:4px;height:4px;background:#6bbf3a"></div><div style="left:506px;top:19px;width:4px;height:4px;background:#3a8de0"></div><div style="left:511px;top:19px;width:4px;height:4px;background:#f1b62a"></div>
<svg style="left:541px;top:8px" width="21" height="19" viewBox="0 0 21 19"><path d="M0 7L10.500 0 21 7v12H0z" fill="#1c6fc4"/><path d="M0 7l10.500 7L21 7v12H0z" fill="#3f9be8"/><path d="M0 19l10.500-8L21 19z" fill="#2a86dc"/></svg>
<div style="left:583px;top:7px;width:12px;height:14px;border-radius:3px;background:linear-gradient(135deg,#f0c23a,#5fc46a 60%,#2a8ae0);transform:skewX(-14deg)"></div><div style="left:591px;top:10px;width:12px;height:13px;border-radius:3px;background:linear-gradient(135deg,#b85ae0,#e04a9a);transform:skewX(-14deg)"></div>
<span style="left:592.50px;top:23px;font-size:6.00px;line-height:normal;color:#fff;font-weight:bold;transform:translateX(-50%);">M365</span>
<div class="ti" style="left:623px;border-radius:50%;background:conic-gradient(#f5c842,#f08a2a 40%,#e2542a 70%,#f5c842)"></div><div style="left:627px;top:10px;width:14px;height:14px;border-radius:50%;background:#fff"></div><div style="left:630.500px;top:13px;width:7px;height:8px;border-radius:2px 2px 4px 4px;background:#7a4fd0"></div>
<div style="left:664px;top:6px;width:20px;height:22px;border-radius:50%;border:5px solid #e8202c;border-top-width:3px;border-bottom-width:3px"></div>
<div class="ti" style="left:704px;border-radius:50%;background:radial-gradient(circle at 35% 30%,#cfe2f5,#7fa6d6 55%,#4a72ae)"></div>
<span style="left:715.00px;top:11px;font-size:11.00px;line-height:normal;color:#fff;transform:translateX(-50%);">Σ</span>
<div style="left:750px;top:7px;width:17px;height:20px;border-radius:2px;background:linear-gradient(180deg,#41a5ee,#2b7cd3 35%,#185abd 70%,#103f91)"></div><div style="left:745px;top:11px;width:12px;height:12px;border-radius:1.500px;background:#185abd"></div>
<span style="left:751.00px;top:12px;font-size:8.50px;line-height:normal;color:#fff;font-weight:bold;transform:translateX(-50%);">W</span>
<div class="run" style="left:739px"></div>
<div style="left:790px;top:7px;width:17px;height:20px;border-radius:2px;background:linear-gradient(180deg,#21a366,#33c481 35%,#107c41 70%,#185c37)"></div><div style="left:785px;top:11px;width:12px;height:12px;border-radius:1.500px;background:#107c41"></div>
<span style="left:791.00px;top:12px;font-size:8.50px;line-height:normal;color:#fff;font-weight:bold;transform:translateX(-50%);">X</span>
<div class="run" style="left:780px"></div>
<div style="left:828px;top:7px;width:19px;height:20px;border-radius:3px;background:#c8161d"></div>
<svg style="left:830px;top:9px" width="15" height="16" viewBox="0 0 15 16"><path d="M1.500 13.500c1-2 4-3.500 6.500-4 2.500-.5 5-.3 5.500.5s-2 1-4.500-1S6 3.500 6.500 2s1.700-.5 1.500 1.500S5 11 1.500 13.500z" fill="none" stroke="#fff" stroke-width="1.200"/></svg>
<div class="run" style="left:821px"></div>
<svg style="left:867px;top:6px" width="23" height="23" viewBox="0 0 23 23"><path d="M11 1.500a9 9 0 0 0-7.700 13.700L2 20l4.900-1.300A9 9 0 1 0 11 1.500z" fill="none" stroke="#3fc351" stroke-width="2"/><path d="M7.500 6.500c-.8 1.500 0 3.800 2 5.800s4.200 2.700 5.600 1.800c.5-.6.300-1.200-.3-1.600l-1.400-.7-1 .9c-1.400-.5-2.500-1.600-3-3l.9-1-.7-1.500c-.5-.8-1.400-1.200-2.100-.7z" fill="#3fc351"/></svg>
<div style="left:882px;top:19px;width:11px;height:11px;border-radius:50%;background:#2a2a2a;border:1px solid #ddd"></div>
<span style="left:887.50px;top:21px;font-size:8.00px;line-height:normal;color:#fff;font-weight:bold;transform:translateX(-50%);">2</span>
<div class="run" style="left:862px"></div>
<div style="left:909px;top:7px;width:20px;height:20px;border-radius:3px;background:#0a2233"></div>
<span style="left:919.00px;top:11px;font-size:9.50px;line-height:normal;color:#8fc9f3;font-weight:bold;transform:translateX(-50%);">Lrc</span>
<div class="run" style="left:903px"></div>
<div class="ti" style="left:949px;border-radius:50%;background:conic-gradient(from -60deg,#e8453c 0 120deg,#fbc116 120deg 240deg,#34a853 240deg 360deg)"></div><div style="left:955px;top:12px;width:10px;height:10px;border-radius:50%;background:#4b8bf4;border:1.500px solid #fff"></div>
<div class="run" style="left:944px"></div>
<div style="left:981px;top:0;width:40px;height:33px;background:#c4722f"></div><div style="left:981px;top:31px;width:40px;height:2px;background:#f08a2a"></div>
<div style="left:991px;top:6px;width:19px;height:19px;border-radius:8px 8px 8px 3px;background:#e9e0f7;border:2px solid #8a5fd6"></div>
<svg style="left:995px;top:10px" width="11" height="11" viewBox="0 0 11 11"><path d="M2 1.500c-1 1.500-.3 4 1.800 6s4.400 2.600 5.800 1.600l-.9-2-1.500.6C6 7 4.500 5.500 3.800 4.200l.8-1.300z" fill="#7a4fd0"/></svg>
<div style="left:1001px;top:19px;width:11px;height:11px;border-radius:2px;background:#ea2f2f"></div>
<span style="left:1006.50px;top:21px;font-size:8.00px;line-height:normal;color:#fff;font-weight:bold;transform:translateX(-50%);">1</span>
<div style="left:1021px;top:0;width:41px;height:33px;background:#3b4957"></div><div style="left:1021px;top:31px;width:41px;height:2px;background:#8fb3d4"></div>
<div class="ti" style="left:1030px;border-radius:8px;background:#1f5ff0"></div>
<span style="left:1041.00px;top:10px;font-size:10.50px;line-height:normal;color:#fff;font-weight:bold;transform:translateX(-50%);">zm</span>
<div style="left:1275px;top:8px;width:14px;height:15px;border-radius:3px;background:#5059c9"></div><div style="left:1285px;top:7px;width:5px;height:5px;border-radius:50%;background:#7b83eb"></div>
<span style="left:1281.00px;top:12px;font-size:9.00px;line-height:normal;color:#fff;font-weight:bold;transform:translateX(-50%);">T</span>
<div style="left:1295.500px;top:9px;width:14px;height:14px;border-radius:50%;background:#2f6ff2"></div>
<span style="left:1302.50px;top:12px;font-size:6.50px;line-height:normal;color:#fff;font-weight:bold;transform:translateX(-50%);">zm</span>
<div style="left:1315.500px;top:9px;width:14px;height:14px;border-radius:6px 6px 6px 2px;background:#e4d8f6;border:1.500px solid #8a5fd6"></div><div style="left:1326px;top:8px;width:4px;height:4px;border-radius:50%;background:#e82f3a"></div>
<div style="left:1337px;top:8px;width:11px;height:16px;border-radius:5px;background:#1f8ae8"></div>
<svg style="left:1339.500px;top:11px" width="6" height="10" viewBox="0 0 6 10"><path d="M.5 2.800l5 4.400L3 9.500v-9l2.500 2.300-5 4.400" fill="none" stroke="#fff" stroke-width=".9"/></svg>
<div style="left:1358.500px;top:8px;width:7px;height:11px;border-radius:3.500px;background:#e9e9e9"></div><div style="left:1356.500px;top:14px;width:11px;height:7px;border:1px solid #ddd;border-top:0;border-radius:0 0 5.500px 5.500px"></div><div style="left:1361.500px;top:21px;width:1px;height:3px;background:#ddd"></div>
<svg style="left:1375.500px;top:8px" width="14" height="15" viewBox="0 0 14 15"><path d="M7 .5l6 2c0 6-2 9.500-6 12C3 12 1 8.500 1 2.500z" fill="#fff"/><path d="M7 .5v14M1.300 6.500h11.400" stroke="#1c2c3c" stroke-width="1.600"/><path d="M7.500 10.500l1.700 1.700 3-3.500" stroke="#2fa84f" stroke-width="1.600" fill="none"/></svg>
<div style="left:1395.500px;top:9px;width:13px;height:13px;border-radius:50%;background:#f08a2a"></div><div style="left:1402.500px;top:17px;width:7px;height:7px;border-radius:50%;background:#2a7ae8"></div>
<svg style="left:1416px;top:9px" width="15" height="14" viewBox="0 0 15 14" fill="none" stroke="#d6d6d6" stroke-width="1.100"><path d="M2 12.500A10 10 0 0 1 12 2.500"/><path d="M5 12.500a7 7 0 0 1 7-7"/><path d="M8 12.500a4 4 0 0 1 4-4"/><circle cx="11.500" cy="12" r="1" fill="#d6d6d6"/></svg>
<svg style="left:1434.500px;top:10px" width="16" height="11" viewBox="0 0 16 11"><rect x="1.500" y="3" width="12" height="7" fill="none" stroke="#e6e6e6" stroke-width="1"/><rect x="13.500" y="5" width="1.500" height="3" fill="#e6e6e6"/><rect x="3" y="4.500" width="6" height="4" fill="#e6e6e6"/><path d="M3 0v3M1.500 1h3" stroke="#e6e6e6" stroke-width="1.200"/></svg>
<svg style="left:1454.500px;top:9.500px" width="16" height="13" viewBox="0 0 16 13" fill="none" stroke="#e6e6e6" stroke-width="1"><path d="M1 4.500h2.500l3.500-3v10l-3.500-3H1z"/><path d="M9 4.500a3 3 0 0 1 0 4" /><path d="M11 2.800a5.500 5.500 0 0 1 0 7.400" stroke="#9aa3ab"/><path d="M13 1.200a8 8 0 0 1 0 10.600" stroke="#7a858f"/></svg>
<span style="left:1477.80px;top:11px;font-size:9.20px;line-height:normal;color:#f2f2f2;letter-spacing:-0.441px;">ENG</span>
<span style="left:1508.60px;top:3px;font-size:9.80px;line-height:normal;color:#f2f2f2;letter-spacing:-0.009px;">11:06 AM</span>
<span style="left:1507.60px;top:18px;font-size:9.80px;line-height:normal;color:#f2f2f2;letter-spacing:-0.033px;">6/26/2025</span>
<svg style="left:1566px;top:8px" width="14" height="14" viewBox="0 0 14 14"><path d="M.5.500h13v10H5l-2.500 3v-3h-2z" fill="#f2f2f2"/><path d="M3 3.500h8M3 6h8M3 8.500h5" stroke="#1c2c3c" stroke-width="1"/></svg>
<div style="left:1571px;top:15.500px;width:14px;height:13px;border-radius:7px;background:#2a3038;border:1px solid #9aa0a8"></div>
<span style="left:1578.00px;top:19px;font-size:8.00px;line-height:normal;color:#fff;transform:translateX(-50%);">19</span>
<div style="left:1596px;top:0;width:1px;height:34px;background:#66727e"></div>
</div>
</body>
</html>
